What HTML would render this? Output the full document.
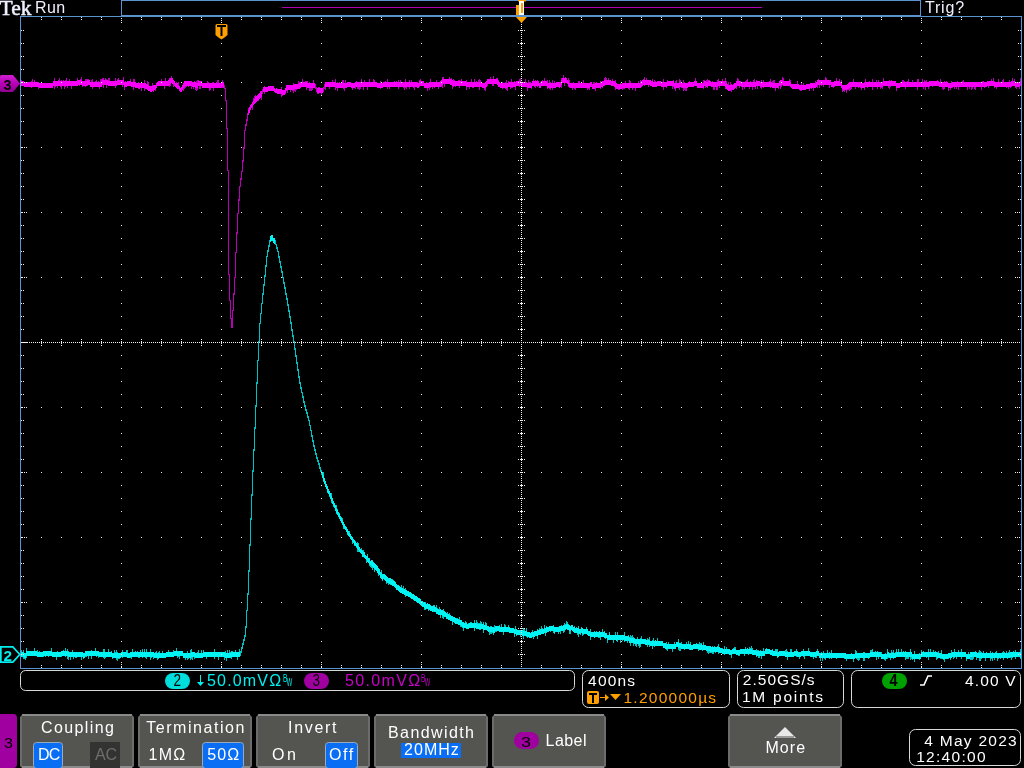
<!DOCTYPE html><html><head><meta charset="utf-8"><title>scope</title><style>html,body{margin:0;padding:0;background:#000;width:1024px;height:768px;overflow:hidden}svg{position:absolute;left:0;top:0;display:block;will-change:transform}</style></head><body><svg width="1024" height="768" viewBox="0 0 1024 768"><rect width="1024" height="768" fill="#000"/><g shape-rendering="crispEdges"><path fill="#5a93cf" d="M121 0h800v1h-800zM121 0h1v16h-1zM920 0h1v16h-1zM121 15h800v1h-800z"/><rect x="282" y="7" width="480" height="1" fill="#b000b0"/><path fill="#5a93cf" d="M20 16h1002v1h-1002zM20 668h1002v1h-1002zM20 16h1v653h-1zM1021 16h1v653h-1z"/><path fill="#b800b8" d="M21 80h1v1h-1zM31 81h1v1h-1zM31 87h1v1h-1zM32 79h1v3h-1zM34 80h1v2h-1zM38 87h1v2h-1zM54 78h1v3h-1zM54 86h1v3h-1zM55 86h1v1h-1zM57 86h1v2h-1zM58 80h1v1h-1zM59 78h1v3h-1zM60 86h1v1h-1zM61 80h1v1h-1zM61 86h1v3h-1zM63 80h1v1h-1zM64 86h1v3h-1zM65 80h1v1h-1zM65 86h1v1h-1zM66 78h1v3h-1zM67 86h1v2h-1zM69 79h1v2h-1zM71 86h1v3h-1zM77 78h1v2h-1zM79 85h1v1h-1zM80 79h1v1h-1zM81 77h1v3h-1zM82 86h1v1h-1zM85 79h1v2h-1zM85 86h1v1h-1zM86 79h1v2h-1zM87 79h1v1h-1zM87 85h1v1h-1zM88 79h1v1h-1zM91 80h1v2h-1zM92 79h1v3h-1zM92 87h1v2h-1zM95 81h1v1h-1zM96 80h1v2h-1zM98 81h1v1h-1zM99 87h1v2h-1zM100 79h1v3h-1zM101 79h1v3h-1zM102 78h1v2h-1zM103 78h1v2h-1zM103 85h1v3h-1zM105 78h1v2h-1zM106 79h1v1h-1zM106 85h1v3h-1zM108 78h1v3h-1zM109 78h1v3h-1zM115 78h1v3h-1zM115 86h1v2h-1zM117 79h1v1h-1zM118 78h1v2h-1zM122 85h1v2h-1zM123 77h1v3h-1zM124 87h1v3h-1zM125 81h1v1h-1zM130 79h1v2h-1zM133 79h1v3h-1zM133 87h1v3h-1zM134 79h1v3h-1zM138 82h1v1h-1zM138 88h1v1h-1zM141 88h1v3h-1zM144 80h1v3h-1zM144 88h1v3h-1zM147 81h1v3h-1zM148 82h1v3h-1zM152 83h1v3h-1zM153 91h1v1h-1zM155 89h1v2h-1zM161 79h1v2h-1zM164 86h1v3h-1zM165 78h1v3h-1zM169 78h1v1h-1zM169 85h1v2h-1zM170 84h1v2h-1zM171 76h1v2h-1zM173 84h1v3h-1zM176 82h1v1h-1zM178 82h1v3h-1zM183 88h1v3h-1zM184 87h1v2h-1zM185 86h1v2h-1zM186 86h1v1h-1zM188 86h1v1h-1zM191 86h1v3h-1zM193 87h1v2h-1zM194 81h1v1h-1zM195 88h1v2h-1zM196 81h1v2h-1zM196 88h1v3h-1zM197 80h1v3h-1zM197 88h1v2h-1zM198 80h1v1h-1zM199 86h1v3h-1zM200 86h1v3h-1zM207 81h1v2h-1zM208 82h1v1h-1zM209 88h1v3h-1zM210 88h1v2h-1zM212 82h1v1h-1zM213 82h1v1h-1zM213 88h1v3h-1zM216 82h1v1h-1zM217 80h1v3h-1zM218 80h1v3h-1zM221 87h1v1h-1zM222 80h1v2h-1zM222 87h1v1h-1zM248 108h1v2h-1zM252 107h1v3h-1zM253 98h1v3h-1zM254 96h1v3h-1zM255 95h1v2h-1zM258 100h1v1h-1zM260 91h1v1h-1zM261 97h1v3h-1zM264 86h1v1h-1zM264 92h1v2h-1zM281 87h1v2h-1zM281 94h1v3h-1zM282 95h1v1h-1zM285 93h1v1h-1zM287 90h1v3h-1zM290 90h1v2h-1zM292 90h1v1h-1zM293 83h1v2h-1zM293 90h1v3h-1zM294 89h1v2h-1zM295 89h1v3h-1zM296 89h1v1h-1zM298 81h1v3h-1zM299 82h1v1h-1zM302 79h1v3h-1zM305 81h1v1h-1zM306 81h1v1h-1zM306 87h1v3h-1zM307 81h1v2h-1zM309 82h1v1h-1zM309 88h1v3h-1zM310 88h1v3h-1zM311 88h1v3h-1zM312 88h1v2h-1zM313 80h1v3h-1zM317 93h1v1h-1zM318 87h1v1h-1zM318 93h1v1h-1zM319 87h1v1h-1zM321 93h1v3h-1zM325 87h1v3h-1zM329 87h1v2h-1zM332 80h1v2h-1zM335 79h1v3h-1zM335 87h1v3h-1zM337 82h1v1h-1zM337 88h1v3h-1zM339 82h1v1h-1zM341 82h1v1h-1zM342 80h1v3h-1zM343 80h1v3h-1zM343 88h1v1h-1zM344 88h1v3h-1zM345 80h1v3h-1zM352 88h1v2h-1zM355 87h1v2h-1zM356 81h1v1h-1zM357 87h1v2h-1zM358 87h1v2h-1zM359 87h1v3h-1zM360 87h1v2h-1zM361 79h1v3h-1zM363 87h1v3h-1zM364 80h1v2h-1zM367 87h1v3h-1zM369 79h1v3h-1zM373 79h1v3h-1zM374 80h1v2h-1zM380 81h1v2h-1zM380 88h1v1h-1zM385 81h1v1h-1zM387 79h1v3h-1zM387 87h1v2h-1zM389 87h1v2h-1zM394 81h1v1h-1zM396 81h1v1h-1zM398 80h1v2h-1zM398 87h1v2h-1zM400 80h1v2h-1zM403 87h1v1h-1zM404 87h1v3h-1zM405 79h1v3h-1zM405 87h1v1h-1zM406 87h1v2h-1zM409 80h1v2h-1zM409 87h1v2h-1zM411 80h1v2h-1zM413 87h1v1h-1zM414 87h1v3h-1zM417 82h1v1h-1zM419 80h1v1h-1zM419 86h1v1h-1zM420 79h1v2h-1zM426 82h1v1h-1zM427 88h1v3h-1zM429 87h1v3h-1zM430 79h1v3h-1zM430 87h1v1h-1zM432 87h1v2h-1zM434 87h1v1h-1zM436 80h1v2h-1zM438 87h1v2h-1zM441 86h1v1h-1zM442 77h1v2h-1zM442 85h1v3h-1zM443 77h1v2h-1zM444 84h1v3h-1zM449 77h1v2h-1zM451 78h1v1h-1zM452 86h1v3h-1zM453 79h1v2h-1zM453 86h1v1h-1zM454 80h1v1h-1zM455 86h1v1h-1zM458 80h1v1h-1zM459 80h1v1h-1zM459 86h1v2h-1zM461 79h1v2h-1zM466 80h1v2h-1zM466 87h1v3h-1zM469 87h1v2h-1zM471 79h1v3h-1zM472 87h1v1h-1zM473 87h1v1h-1zM474 79h1v3h-1zM476 81h1v1h-1zM478 80h1v2h-1zM479 79h1v3h-1zM479 87h1v3h-1zM480 80h1v2h-1zM484 88h1v2h-1zM485 88h1v3h-1zM487 84h1v2h-1zM490 77h1v2h-1zM492 84h1v2h-1zM493 76h1v3h-1zM493 84h1v2h-1zM496 78h1v1h-1zM497 78h1v1h-1zM498 80h1v1h-1zM502 82h1v1h-1zM502 88h1v1h-1zM505 82h1v1h-1zM505 88h1v1h-1zM506 80h1v3h-1zM506 88h1v2h-1zM507 88h1v3h-1zM508 81h1v1h-1zM510 87h1v2h-1zM511 79h1v3h-1zM511 87h1v1h-1zM512 87h1v1h-1zM514 81h1v1h-1zM515 87h1v3h-1zM519 79h1v2h-1zM519 86h1v1h-1zM520 78h1v3h-1zM525 79h1v3h-1zM527 88h1v3h-1zM528 80h1v3h-1zM529 82h1v1h-1zM530 82h1v1h-1zM531 88h1v1h-1zM533 79h1v2h-1zM534 86h1v1h-1zM535 80h1v1h-1zM535 86h1v2h-1zM537 80h1v1h-1zM537 86h1v1h-1zM540 82h1v1h-1zM542 80h1v1h-1zM544 78h1v3h-1zM547 80h1v3h-1zM547 88h1v1h-1zM549 80h1v3h-1zM549 88h1v1h-1zM550 82h1v1h-1zM550 88h1v2h-1zM552 80h1v3h-1zM552 88h1v2h-1zM554 81h1v2h-1zM561 78h1v2h-1zM561 85h1v3h-1zM563 75h1v3h-1zM564 83h1v3h-1zM565 77h1v1h-1zM568 78h1v3h-1zM568 86h1v1h-1zM569 80h1v3h-1zM569 87h1v1h-1zM572 88h1v2h-1zM573 82h1v1h-1zM574 88h1v1h-1zM575 88h1v2h-1zM578 81h1v2h-1zM579 81h1v2h-1zM581 82h1v1h-1zM583 80h1v3h-1zM587 88h1v2h-1zM588 88h1v1h-1zM589 88h1v2h-1zM593 82h1v2h-1zM594 82h1v2h-1zM595 88h1v3h-1zM596 82h1v1h-1zM600 81h1v1h-1zM600 88h1v1h-1zM602 87h1v1h-1zM604 78h1v2h-1zM605 77h1v3h-1zM606 78h1v2h-1zM608 78h1v2h-1zM612 79h1v2h-1zM615 80h1v2h-1zM615 88h1v2h-1zM618 89h1v1h-1zM619 89h1v1h-1zM620 83h1v1h-1zM622 88h1v2h-1zM623 88h1v1h-1zM624 88h1v1h-1zM625 81h1v2h-1zM628 88h1v1h-1zM629 80h1v3h-1zM629 88h1v2h-1zM630 81h1v2h-1zM632 88h1v2h-1zM635 88h1v3h-1zM638 81h1v2h-1zM640 80h1v2h-1zM643 79h1v1h-1zM644 77h1v3h-1zM644 85h1v1h-1zM646 78h1v2h-1zM648 85h1v2h-1zM652 79h1v2h-1zM654 80h1v2h-1zM655 81h1v1h-1zM663 79h1v3h-1zM663 87h1v3h-1zM666 87h1v1h-1zM667 80h1v1h-1zM672 86h1v3h-1zM673 80h1v1h-1zM673 86h1v1h-1zM674 88h1v1h-1zM675 81h1v2h-1zM675 88h1v3h-1zM676 80h1v3h-1zM679 79h1v3h-1zM679 87h1v3h-1zM680 80h1v2h-1zM681 87h1v1h-1zM683 80h1v3h-1zM683 88h1v3h-1zM684 82h1v1h-1zM684 88h1v2h-1zM685 88h1v3h-1zM686 88h1v3h-1zM689 81h1v1h-1zM695 78h1v3h-1zM703 80h1v3h-1zM703 88h1v1h-1zM704 80h1v1h-1zM705 86h1v2h-1zM706 80h1v2h-1zM707 79h1v3h-1zM707 87h1v1h-1zM708 80h1v1h-1zM709 80h1v1h-1zM712 81h1v1h-1zM713 87h1v3h-1zM714 87h1v3h-1zM716 87h1v3h-1zM717 80h1v2h-1zM717 87h1v3h-1zM718 79h1v2h-1zM719 86h1v2h-1zM722 79h1v2h-1zM725 78h1v3h-1zM725 87h1v2h-1zM726 81h1v2h-1zM728 82h1v3h-1zM730 82h1v3h-1zM730 90h1v1h-1zM731 84h1v1h-1zM731 90h1v2h-1zM736 87h1v2h-1zM737 78h1v3h-1zM738 79h1v2h-1zM739 86h1v2h-1zM742 87h1v3h-1zM744 87h1v2h-1zM745 81h1v1h-1zM746 80h1v2h-1zM747 79h1v3h-1zM749 87h1v2h-1zM750 81h1v1h-1zM752 87h1v3h-1zM753 80h1v2h-1zM754 79h1v3h-1zM755 87h1v2h-1zM756 80h1v1h-1zM757 86h1v3h-1zM760 87h1v1h-1zM761 80h1v2h-1zM761 87h1v2h-1zM763 80h1v2h-1zM763 87h1v1h-1zM769 81h1v1h-1zM770 79h1v3h-1zM770 87h1v1h-1zM772 81h1v2h-1zM773 80h1v3h-1zM774 80h1v3h-1zM775 88h1v3h-1zM778 88h1v1h-1zM780 86h1v3h-1zM781 85h1v2h-1zM782 77h1v3h-1zM783 78h1v3h-1zM789 79h1v2h-1zM790 80h1v2h-1zM797 81h1v3h-1zM800 90h1v1h-1zM801 82h1v3h-1zM801 90h1v1h-1zM803 83h1v2h-1zM809 89h1v2h-1zM811 88h1v1h-1zM813 88h1v3h-1zM815 81h1v3h-1zM817 85h1v3h-1zM818 79h1v1h-1zM819 85h1v3h-1zM821 85h1v1h-1zM823 85h1v2h-1zM825 77h1v3h-1zM826 78h1v2h-1zM829 85h1v3h-1zM833 87h1v1h-1zM834 86h1v1h-1zM836 78h1v3h-1zM839 79h1v2h-1zM841 80h1v3h-1zM842 89h1v3h-1zM844 90h1v2h-1zM846 90h1v3h-1zM847 89h1v1h-1zM848 89h1v1h-1zM849 88h1v3h-1zM850 87h1v3h-1zM851 87h1v2h-1zM853 79h1v3h-1zM855 87h1v2h-1zM858 87h1v1h-1zM860 87h1v1h-1zM861 88h1v2h-1zM864 82h1v1h-1zM864 88h1v2h-1zM865 79h1v3h-1zM867 87h1v1h-1zM869 81h1v1h-1zM872 79h1v3h-1zM872 87h1v3h-1zM876 80h1v2h-1zM877 87h1v2h-1zM878 80h1v2h-1zM880 87h1v2h-1zM881 87h1v1h-1zM882 87h1v2h-1zM883 78h1v3h-1zM888 86h1v2h-1zM889 80h1v1h-1zM889 86h1v3h-1zM890 86h1v1h-1zM891 80h1v1h-1zM896 88h1v3h-1zM902 80h1v2h-1zM903 80h1v2h-1zM904 81h1v1h-1zM905 87h1v2h-1zM907 81h1v1h-1zM908 79h1v3h-1zM912 80h1v2h-1zM917 79h1v3h-1zM917 87h1v3h-1zM918 79h1v3h-1zM922 79h1v3h-1zM923 87h1v2h-1zM924 80h1v2h-1zM925 81h1v1h-1zM925 87h1v3h-1zM926 80h1v2h-1zM928 87h1v2h-1zM929 86h1v1h-1zM932 86h1v1h-1zM937 80h1v1h-1zM940 79h1v3h-1zM942 87h1v2h-1zM943 87h1v3h-1zM944 81h1v1h-1zM944 87h1v2h-1zM946 81h1v1h-1zM948 88h1v3h-1zM950 88h1v2h-1zM951 81h1v2h-1zM952 87h1v1h-1zM954 87h1v2h-1zM956 87h1v2h-1zM957 81h1v1h-1zM958 87h1v3h-1zM962 81h1v1h-1zM963 80h1v2h-1zM967 87h1v3h-1zM969 87h1v2h-1zM971 87h1v3h-1zM972 87h1v2h-1zM974 87h1v2h-1zM975 87h1v3h-1zM981 87h1v3h-1zM982 81h1v1h-1zM983 81h1v1h-1zM984 87h1v1h-1zM988 86h1v2h-1zM991 79h1v2h-1zM993 78h1v3h-1zM994 81h1v1h-1zM994 87h1v1h-1zM996 87h1v2h-1zM998 79h1v3h-1zM1002 80h1v2h-1zM1003 79h1v3h-1zM1006 87h1v1h-1zM1008 87h1v2h-1zM1009 80h1v2h-1zM1010 87h1v1h-1zM1011 86h1v1h-1zM1012 78h1v3h-1zM1014 79h1v2h-1zM1015 87h1v1h-1zM1016 87h1v2h-1zM1019 87h1v2h-1zM1020 78h1v3h-1z"/><path fill="#f800f8" d="M21 81h1v5h-1zM22 81h1v5h-1zM23 81h1v5h-1zM24 82h1v5h-1zM25 82h1v5h-1zM26 82h1v5h-1zM27 82h1v5h-1zM28 82h1v5h-1zM29 82h1v5h-1zM30 82h1v5h-1zM31 82h1v5h-1zM32 82h1v5h-1zM33 82h1v5h-1zM34 82h1v5h-1zM35 82h1v5h-1zM36 82h1v5h-1zM37 82h1v5h-1zM38 82h1v5h-1zM39 83h1v5h-1zM40 83h1v5h-1zM41 83h1v5h-1zM42 83h1v5h-1zM43 83h1v5h-1zM44 83h1v5h-1zM45 83h1v5h-1zM46 83h1v5h-1zM47 83h1v5h-1zM48 83h1v5h-1zM49 83h1v5h-1zM50 83h1v5h-1zM51 83h1v5h-1zM52 83h1v5h-1zM53 81h1v5h-1zM54 81h1v5h-1zM55 81h1v5h-1zM56 81h1v5h-1zM57 81h1v5h-1zM58 81h1v5h-1zM59 81h1v5h-1zM60 81h1v5h-1zM61 81h1v5h-1zM62 81h1v5h-1zM63 81h1v5h-1zM64 81h1v5h-1zM65 81h1v5h-1zM66 81h1v5h-1zM67 81h1v5h-1zM68 81h1v5h-1zM69 81h1v5h-1zM70 81h1v5h-1zM71 81h1v5h-1zM72 81h1v5h-1zM73 81h1v5h-1zM74 81h1v5h-1zM75 81h1v5h-1zM76 81h1v5h-1zM77 80h1v6h-1zM78 80h1v5h-1zM79 80h1v5h-1zM80 80h1v5h-1zM81 80h1v5h-1zM82 81h1v5h-1zM83 81h1v5h-1zM84 81h1v5h-1zM85 81h1v5h-1zM86 81h1v5h-1zM87 80h1v5h-1zM88 80h1v5h-1zM89 80h1v5h-1zM90 82h1v5h-1zM91 82h1v5h-1zM92 82h1v5h-1zM93 82h1v5h-1zM94 82h1v5h-1zM95 82h1v5h-1zM96 82h1v5h-1zM97 82h1v5h-1zM98 82h1v5h-1zM99 82h1v5h-1zM100 82h1v5h-1zM101 82h1v5h-1zM102 80h1v5h-1zM103 80h1v5h-1zM104 80h1v5h-1zM105 80h1v5h-1zM106 80h1v5h-1zM107 80h1v5h-1zM108 81h1v5h-1zM109 81h1v5h-1zM110 81h1v5h-1zM111 81h1v5h-1zM112 81h1v5h-1zM113 81h1v5h-1zM114 81h1v5h-1zM115 81h1v5h-1zM116 81h1v5h-1zM117 80h1v5h-1zM118 80h1v5h-1zM119 80h1v5h-1zM120 80h1v5h-1zM121 80h1v5h-1zM122 80h1v5h-1zM123 80h1v5h-1zM124 82h1v5h-1zM125 82h1v5h-1zM126 82h1v5h-1zM127 81h1v5h-1zM128 81h1v5h-1zM129 81h1v5h-1zM130 81h1v5h-1zM131 82h1v5h-1zM132 82h1v5h-1zM133 82h1v5h-1zM134 82h1v5h-1zM135 82h1v6h-1zM136 83h1v5h-1zM137 83h1v5h-1zM138 83h1v5h-1zM139 83h1v6h-1zM140 83h1v5h-1zM141 83h1v5h-1zM142 83h1v5h-1zM143 83h1v5h-1zM144 83h1v5h-1zM145 83h1v6h-1zM146 84h1v5h-1zM147 84h1v6h-1zM148 85h1v6h-1zM149 86h1v5h-1zM150 86h1v6h-1zM151 86h1v6h-1zM152 86h1v5h-1zM153 85h1v6h-1zM154 85h1v5h-1zM155 85h1v4h-1zM156 83h1v5h-1zM157 82h1v4h-1zM158 81h1v5h-1zM159 81h1v5h-1zM160 81h1v5h-1zM161 81h1v5h-1zM162 81h1v5h-1zM163 81h1v5h-1zM164 81h1v5h-1zM165 81h1v5h-1zM166 81h1v5h-1zM167 81h1v5h-1zM168 80h1v6h-1zM169 79h1v6h-1zM170 78h1v6h-1zM171 78h1v5h-1zM172 78h1v6h-1zM173 80h1v4h-1zM174 81h1v5h-1zM175 83h1v4h-1zM176 83h1v5h-1zM177 83h1v6h-1zM178 85h1v4h-1zM179 86h1v5h-1zM180 88h1v4h-1zM181 87h1v5h-1zM182 85h1v5h-1zM183 83h1v5h-1zM184 81h1v6h-1zM185 81h1v5h-1zM186 81h1v5h-1zM187 81h1v5h-1zM188 81h1v5h-1zM189 81h1v5h-1zM190 81h1v5h-1zM191 81h1v5h-1zM192 82h1v5h-1zM193 82h1v5h-1zM194 82h1v5h-1zM195 82h1v6h-1zM196 83h1v5h-1zM197 83h1v5h-1zM198 81h1v5h-1zM199 81h1v5h-1zM200 81h1v5h-1zM201 81h1v5h-1zM202 83h1v5h-1zM203 83h1v5h-1zM204 83h1v5h-1zM205 83h1v5h-1zM206 83h1v5h-1zM207 83h1v5h-1zM208 83h1v5h-1zM209 83h1v5h-1zM210 83h1v5h-1zM211 83h1v5h-1zM212 83h1v5h-1zM213 83h1v5h-1zM214 83h1v5h-1zM215 83h1v5h-1zM216 83h1v5h-1zM217 83h1v5h-1zM218 83h1v5h-1zM219 83h1v5h-1zM220 83h1v5h-1zM221 82h1v5h-1zM222 82h1v5h-1zM223 82h1v6h-1zM248 110h1v5h-1zM249 107h1v6h-1zM250 105h1v5h-1zM251 104h1v4h-1zM252 102h1v5h-1zM253 101h1v4h-1zM254 99h1v5h-1zM255 97h1v6h-1zM256 96h1v6h-1zM257 95h1v6h-1zM258 94h1v6h-1zM259 93h1v6h-1zM260 92h1v6h-1zM261 91h1v6h-1zM263 87h1v5h-1zM264 87h1v5h-1zM265 87h1v5h-1zM266 87h1v5h-1zM267 87h1v5h-1zM268 86h1v5h-1zM269 86h1v5h-1zM270 86h1v5h-1zM271 86h1v5h-1zM272 86h1v5h-1zM273 86h1v5h-1zM274 88h1v4h-1zM275 89h1v4h-1zM276 88h1v5h-1zM277 89h1v5h-1zM278 89h1v5h-1zM279 89h1v5h-1zM280 89h1v5h-1zM281 89h1v5h-1zM282 90h1v5h-1zM283 90h1v5h-1zM284 90h1v5h-1zM285 88h1v5h-1zM286 85h1v6h-1zM287 85h1v5h-1zM288 85h1v5h-1zM289 85h1v5h-1zM290 85h1v5h-1zM291 85h1v5h-1zM292 85h1v5h-1zM293 85h1v5h-1zM294 84h1v5h-1zM295 84h1v5h-1zM296 84h1v5h-1zM297 84h1v5h-1zM298 84h1v5h-1zM299 83h1v6h-1zM300 82h1v6h-1zM301 82h1v5h-1zM302 82h1v5h-1zM303 82h1v5h-1zM304 82h1v5h-1zM305 82h1v5h-1zM306 82h1v5h-1zM307 83h1v5h-1zM308 83h1v5h-1zM309 83h1v5h-1zM310 83h1v5h-1zM311 83h1v5h-1zM312 83h1v5h-1zM313 83h1v5h-1zM314 83h1v5h-1zM317 88h1v5h-1zM318 88h1v5h-1zM319 88h1v5h-1zM320 88h1v5h-1zM321 88h1v5h-1zM322 88h1v5h-1zM325 82h1v5h-1zM326 82h1v5h-1zM327 82h1v5h-1zM328 82h1v5h-1zM329 82h1v5h-1zM330 82h1v5h-1zM331 82h1v5h-1zM332 82h1v5h-1zM333 82h1v5h-1zM334 82h1v5h-1zM335 82h1v5h-1zM336 83h1v5h-1zM337 83h1v5h-1zM338 83h1v5h-1zM339 83h1v5h-1zM340 83h1v5h-1zM341 83h1v5h-1zM342 83h1v5h-1zM343 83h1v5h-1zM344 83h1v5h-1zM345 83h1v5h-1zM346 83h1v5h-1zM347 82h1v5h-1zM348 82h1v5h-1zM349 82h1v5h-1zM350 82h1v5h-1zM351 83h1v5h-1zM352 83h1v5h-1zM353 83h1v5h-1zM354 83h1v5h-1zM355 82h1v5h-1zM356 82h1v5h-1zM357 82h1v5h-1zM358 82h1v5h-1zM359 82h1v5h-1zM360 82h1v5h-1zM361 82h1v5h-1zM362 82h1v5h-1zM363 82h1v5h-1zM364 82h1v5h-1zM365 82h1v5h-1zM366 82h1v5h-1zM367 82h1v5h-1zM368 82h1v5h-1zM369 82h1v5h-1zM370 82h1v5h-1zM371 82h1v5h-1zM372 82h1v5h-1zM373 82h1v5h-1zM374 82h1v5h-1zM375 82h1v5h-1zM376 82h1v5h-1zM377 83h1v5h-1zM378 83h1v5h-1zM379 83h1v5h-1zM380 83h1v5h-1zM381 83h1v5h-1zM382 83h1v5h-1zM383 82h1v5h-1zM384 82h1v5h-1zM385 82h1v5h-1zM386 82h1v5h-1zM387 82h1v5h-1zM388 82h1v5h-1zM389 82h1v5h-1zM390 82h1v5h-1zM391 82h1v5h-1zM392 82h1v5h-1zM393 82h1v5h-1zM394 82h1v5h-1zM395 82h1v5h-1zM396 82h1v5h-1zM397 82h1v5h-1zM398 82h1v5h-1zM399 82h1v5h-1zM400 82h1v5h-1zM401 82h1v5h-1zM402 82h1v5h-1zM403 82h1v5h-1zM404 82h1v5h-1zM405 82h1v5h-1zM406 82h1v5h-1zM407 82h1v5h-1zM408 82h1v5h-1zM409 82h1v5h-1zM410 82h1v5h-1zM411 82h1v5h-1zM412 82h1v5h-1zM413 82h1v5h-1zM414 82h1v5h-1zM415 82h1v5h-1zM416 82h1v5h-1zM417 83h1v5h-1zM418 83h1v5h-1zM419 81h1v5h-1zM420 81h1v5h-1zM421 81h1v5h-1zM422 81h1v5h-1zM423 81h1v5h-1zM424 83h1v5h-1zM425 83h1v5h-1zM426 83h1v5h-1zM427 83h1v5h-1zM428 83h1v5h-1zM429 82h1v5h-1zM430 82h1v5h-1zM431 82h1v5h-1zM432 82h1v5h-1zM433 82h1v5h-1zM434 82h1v5h-1zM435 82h1v5h-1zM436 82h1v5h-1zM437 82h1v5h-1zM438 82h1v5h-1zM439 82h1v5h-1zM440 81h1v6h-1zM441 80h1v6h-1zM442 79h1v6h-1zM443 79h1v5h-1zM444 79h1v5h-1zM445 79h1v5h-1zM446 79h1v5h-1zM447 79h1v5h-1zM448 79h1v5h-1zM449 79h1v5h-1zM450 79h1v6h-1zM451 79h1v6h-1zM452 80h1v6h-1zM453 81h1v5h-1zM454 81h1v5h-1zM455 81h1v5h-1zM456 81h1v5h-1zM457 81h1v5h-1zM458 81h1v5h-1zM459 81h1v5h-1zM460 81h1v5h-1zM461 81h1v5h-1zM462 81h1v5h-1zM463 81h1v5h-1zM464 81h1v5h-1zM465 81h1v5h-1zM466 82h1v5h-1zM467 82h1v5h-1zM468 82h1v5h-1zM469 82h1v5h-1zM470 82h1v5h-1zM471 82h1v5h-1zM472 82h1v5h-1zM473 82h1v5h-1zM474 82h1v5h-1zM475 82h1v5h-1zM476 82h1v5h-1zM477 82h1v5h-1zM478 82h1v5h-1zM479 82h1v5h-1zM480 82h1v5h-1zM481 82h1v5h-1zM482 83h1v5h-1zM483 83h1v5h-1zM484 83h1v5h-1zM485 82h1v6h-1zM486 81h1v6h-1zM487 79h1v5h-1zM488 79h1v5h-1zM489 79h1v5h-1zM490 79h1v5h-1zM491 79h1v5h-1zM492 79h1v5h-1zM493 79h1v5h-1zM494 79h1v5h-1zM495 79h1v5h-1zM496 79h1v5h-1zM497 79h1v6h-1zM498 81h1v6h-1zM499 82h1v5h-1zM500 83h1v5h-1zM501 83h1v5h-1zM502 83h1v5h-1zM503 83h1v5h-1zM504 83h1v5h-1zM505 83h1v5h-1zM506 83h1v5h-1zM507 83h1v5h-1zM508 82h1v5h-1zM509 82h1v5h-1zM510 82h1v5h-1zM511 82h1v5h-1zM512 82h1v5h-1zM513 82h1v5h-1zM514 82h1v5h-1zM515 82h1v5h-1zM516 81h1v5h-1zM517 81h1v5h-1zM518 81h1v5h-1zM519 81h1v5h-1zM520 81h1v5h-1zM521 82h1v5h-1zM522 82h1v5h-1zM523 82h1v5h-1zM524 82h1v5h-1zM525 82h1v5h-1zM526 82h1v5h-1zM527 83h1v5h-1zM528 83h1v5h-1zM529 83h1v5h-1zM530 83h1v5h-1zM531 83h1v5h-1zM532 81h1v5h-1zM533 81h1v5h-1zM534 81h1v5h-1zM535 81h1v5h-1zM536 81h1v5h-1zM537 81h1v5h-1zM538 81h1v5h-1zM539 83h1v5h-1zM540 83h1v5h-1zM541 81h1v5h-1zM542 81h1v5h-1zM543 81h1v5h-1zM544 81h1v5h-1zM545 81h1v5h-1zM546 81h1v5h-1zM547 83h1v5h-1zM548 83h1v5h-1zM549 83h1v5h-1zM550 83h1v5h-1zM551 83h1v5h-1zM552 83h1v5h-1zM553 83h1v5h-1zM554 83h1v5h-1zM555 83h1v5h-1zM556 82h1v5h-1zM557 82h1v5h-1zM558 82h1v5h-1zM559 82h1v6h-1zM560 82h1v5h-1zM561 80h1v5h-1zM562 78h1v5h-1zM563 78h1v5h-1zM564 78h1v5h-1zM565 78h1v5h-1zM566 78h1v5h-1zM567 80h1v4h-1zM568 81h1v5h-1zM569 83h1v4h-1zM570 83h1v5h-1zM571 83h1v5h-1zM572 83h1v5h-1zM573 83h1v5h-1zM574 83h1v5h-1zM575 83h1v5h-1zM576 83h1v5h-1zM577 83h1v5h-1zM578 83h1v5h-1zM579 83h1v5h-1zM580 83h1v5h-1zM581 83h1v5h-1zM582 83h1v5h-1zM583 83h1v5h-1zM584 83h1v5h-1zM585 83h1v5h-1zM586 83h1v5h-1zM587 83h1v5h-1zM588 83h1v5h-1zM589 83h1v5h-1zM590 82h1v5h-1zM591 82h1v5h-1zM592 84h1v5h-1zM593 84h1v5h-1zM594 84h1v5h-1zM595 83h1v5h-1zM596 83h1v5h-1zM597 83h1v5h-1zM598 83h1v5h-1zM599 83h1v5h-1zM600 82h1v6h-1zM601 82h1v5h-1zM602 81h1v6h-1zM603 81h1v5h-1zM604 80h1v6h-1zM605 80h1v5h-1zM606 80h1v5h-1zM607 80h1v5h-1zM608 80h1v5h-1zM609 80h1v5h-1zM610 80h1v5h-1zM611 81h1v5h-1zM612 81h1v5h-1zM613 81h1v5h-1zM614 81h1v6h-1zM615 82h1v6h-1zM616 83h1v6h-1zM617 84h1v5h-1zM618 84h1v5h-1zM619 84h1v5h-1zM620 84h1v5h-1zM621 84h1v5h-1zM622 83h1v5h-1zM623 83h1v5h-1zM624 83h1v5h-1zM625 83h1v5h-1zM626 83h1v5h-1zM627 83h1v5h-1zM628 83h1v5h-1zM629 83h1v5h-1zM630 83h1v5h-1zM631 83h1v5h-1zM632 83h1v5h-1zM633 83h1v5h-1zM634 83h1v5h-1zM635 83h1v5h-1zM636 83h1v5h-1zM637 83h1v5h-1zM638 83h1v5h-1zM639 83h1v5h-1zM640 82h1v6h-1zM641 81h1v6h-1zM642 80h1v6h-1zM643 80h1v5h-1zM644 80h1v5h-1zM645 80h1v5h-1zM646 80h1v5h-1zM647 80h1v5h-1zM648 80h1v5h-1zM649 80h1v5h-1zM650 80h1v6h-1zM651 81h1v5h-1zM652 81h1v6h-1zM653 82h1v5h-1zM654 82h1v5h-1zM655 82h1v5h-1zM656 82h1v5h-1zM657 81h1v5h-1zM658 81h1v5h-1zM659 81h1v5h-1zM660 81h1v5h-1zM661 82h1v5h-1zM662 82h1v5h-1zM663 82h1v5h-1zM664 82h1v5h-1zM665 82h1v5h-1zM666 82h1v5h-1zM667 81h1v5h-1zM668 81h1v5h-1zM669 81h1v5h-1zM670 81h1v5h-1zM671 81h1v5h-1zM672 81h1v5h-1zM673 81h1v5h-1zM674 83h1v5h-1zM675 83h1v5h-1zM676 83h1v5h-1zM677 83h1v5h-1zM678 83h1v5h-1zM679 82h1v5h-1zM680 82h1v5h-1zM681 82h1v5h-1zM682 83h1v5h-1zM683 83h1v5h-1zM684 83h1v5h-1zM685 83h1v5h-1zM686 83h1v5h-1zM687 83h1v5h-1zM688 82h1v5h-1zM689 82h1v5h-1zM690 82h1v5h-1zM691 82h1v5h-1zM692 82h1v5h-1zM693 82h1v5h-1zM694 81h1v5h-1zM695 81h1v5h-1zM696 81h1v5h-1zM697 83h1v5h-1zM698 83h1v5h-1zM699 83h1v5h-1zM700 83h1v5h-1zM701 83h1v5h-1zM702 83h1v5h-1zM703 83h1v5h-1zM704 81h1v5h-1zM705 81h1v5h-1zM706 82h1v5h-1zM707 82h1v5h-1zM708 81h1v5h-1zM709 81h1v5h-1zM710 81h1v5h-1zM711 82h1v5h-1zM712 82h1v5h-1zM713 82h1v5h-1zM714 82h1v5h-1zM715 82h1v5h-1zM716 82h1v5h-1zM717 82h1v5h-1zM718 81h1v5h-1zM719 81h1v5h-1zM720 81h1v5h-1zM721 81h1v5h-1zM722 81h1v5h-1zM723 81h1v5h-1zM724 81h1v5h-1zM725 81h1v6h-1zM726 83h1v6h-1zM727 84h1v6h-1zM728 85h1v6h-1zM729 85h1v6h-1zM730 85h1v5h-1zM731 85h1v5h-1zM732 85h1v5h-1zM733 84h1v6h-1zM734 83h1v6h-1zM735 83h1v5h-1zM736 81h1v6h-1zM737 81h1v5h-1zM738 81h1v5h-1zM739 81h1v5h-1zM740 81h1v5h-1zM741 82h1v5h-1zM742 82h1v5h-1zM743 82h1v5h-1zM744 82h1v5h-1zM745 82h1v5h-1zM746 82h1v5h-1zM747 82h1v5h-1zM748 82h1v5h-1zM749 82h1v5h-1zM750 82h1v5h-1zM751 82h1v5h-1zM752 82h1v5h-1zM753 82h1v5h-1zM754 82h1v5h-1zM755 82h1v5h-1zM756 81h1v5h-1zM757 81h1v5h-1zM758 81h1v5h-1zM759 81h1v5h-1zM760 82h1v5h-1zM761 82h1v5h-1zM762 82h1v5h-1zM763 82h1v5h-1zM764 82h1v5h-1zM765 82h1v5h-1zM766 82h1v5h-1zM767 82h1v5h-1zM768 82h1v5h-1zM769 82h1v5h-1zM770 82h1v5h-1zM771 82h1v5h-1zM772 83h1v5h-1zM773 83h1v5h-1zM774 83h1v5h-1zM775 83h1v5h-1zM776 83h1v5h-1zM777 83h1v5h-1zM778 83h1v5h-1zM779 81h1v5h-1zM780 80h1v6h-1zM781 80h1v5h-1zM782 80h1v5h-1zM783 81h1v5h-1zM784 81h1v5h-1zM785 81h1v5h-1zM786 81h1v5h-1zM787 81h1v5h-1zM788 81h1v5h-1zM789 81h1v5h-1zM790 82h1v5h-1zM791 84h1v4h-1zM792 84h1v5h-1zM793 84h1v5h-1zM794 84h1v5h-1zM795 84h1v5h-1zM796 84h1v5h-1zM797 84h1v5h-1zM798 84h1v5h-1zM799 85h1v5h-1zM800 85h1v5h-1zM801 85h1v5h-1zM802 85h1v5h-1zM803 85h1v5h-1zM804 85h1v5h-1zM805 85h1v5h-1zM806 84h1v5h-1zM807 84h1v5h-1zM808 84h1v5h-1zM809 84h1v5h-1zM810 83h1v5h-1zM811 83h1v5h-1zM812 83h1v5h-1zM813 83h1v5h-1zM814 83h1v5h-1zM815 84h1v4h-1zM816 82h1v5h-1zM817 80h1v5h-1zM818 80h1v5h-1zM819 80h1v5h-1zM820 80h1v5h-1zM821 80h1v5h-1zM822 80h1v5h-1zM823 80h1v5h-1zM824 80h1v5h-1zM825 80h1v5h-1zM826 80h1v5h-1zM827 80h1v5h-1zM828 80h1v5h-1zM829 80h1v5h-1zM830 80h1v5h-1zM831 82h1v5h-1zM832 82h1v5h-1zM833 82h1v5h-1zM834 81h1v5h-1zM835 81h1v5h-1zM836 81h1v5h-1zM837 81h1v5h-1zM838 81h1v5h-1zM839 81h1v5h-1zM840 82h1v4h-1zM841 83h1v5h-1zM842 85h1v4h-1zM843 85h1v6h-1zM844 85h1v5h-1zM845 85h1v5h-1zM846 85h1v5h-1zM847 84h1v5h-1zM848 83h1v6h-1zM849 82h1v6h-1zM850 82h1v5h-1zM851 82h1v5h-1zM852 82h1v5h-1zM853 82h1v5h-1zM854 82h1v5h-1zM855 82h1v5h-1zM856 82h1v5h-1zM857 82h1v5h-1zM858 82h1v5h-1zM859 82h1v5h-1zM860 82h1v5h-1zM861 83h1v5h-1zM862 83h1v5h-1zM863 83h1v5h-1zM864 83h1v5h-1zM865 82h1v5h-1zM866 82h1v5h-1zM867 82h1v5h-1zM868 82h1v5h-1zM869 82h1v5h-1zM870 82h1v5h-1zM871 82h1v5h-1zM872 82h1v5h-1zM873 82h1v5h-1zM874 82h1v5h-1zM875 82h1v5h-1zM876 82h1v5h-1zM877 82h1v5h-1zM878 82h1v5h-1zM879 82h1v5h-1zM880 82h1v5h-1zM881 82h1v5h-1zM882 82h1v5h-1zM883 81h1v5h-1zM884 81h1v5h-1zM885 81h1v5h-1zM886 81h1v5h-1zM887 81h1v5h-1zM888 81h1v5h-1zM889 81h1v5h-1zM890 81h1v5h-1zM891 81h1v5h-1zM892 81h1v5h-1zM893 81h1v5h-1zM894 81h1v5h-1zM895 81h1v5h-1zM896 83h1v5h-1zM897 83h1v5h-1zM898 83h1v5h-1zM899 83h1v5h-1zM900 82h1v5h-1zM901 82h1v5h-1zM902 82h1v5h-1zM903 82h1v5h-1zM904 82h1v5h-1zM905 82h1v5h-1zM906 82h1v5h-1zM907 82h1v5h-1zM908 82h1v5h-1zM909 82h1v5h-1zM910 82h1v5h-1zM911 82h1v5h-1zM912 82h1v5h-1zM913 82h1v5h-1zM914 82h1v5h-1zM915 82h1v5h-1zM916 82h1v5h-1zM917 82h1v5h-1zM918 82h1v5h-1zM919 82h1v5h-1zM920 82h1v5h-1zM921 82h1v5h-1zM922 82h1v5h-1zM923 82h1v5h-1zM924 82h1v5h-1zM925 82h1v5h-1zM926 82h1v5h-1zM927 82h1v5h-1zM928 82h1v5h-1zM929 81h1v5h-1zM930 81h1v5h-1zM931 81h1v5h-1zM932 81h1v5h-1zM933 81h1v5h-1zM934 81h1v5h-1zM935 81h1v5h-1zM936 81h1v5h-1zM937 81h1v5h-1zM938 81h1v5h-1zM939 82h1v5h-1zM940 82h1v5h-1zM941 82h1v5h-1zM942 82h1v5h-1zM943 82h1v5h-1zM944 82h1v5h-1zM945 82h1v5h-1zM946 82h1v5h-1zM947 82h1v5h-1zM948 83h1v5h-1zM949 83h1v5h-1zM950 83h1v5h-1zM951 83h1v5h-1zM952 82h1v5h-1zM953 82h1v5h-1zM954 82h1v5h-1zM955 82h1v5h-1zM956 82h1v5h-1zM957 82h1v5h-1zM958 82h1v5h-1zM959 82h1v5h-1zM960 82h1v5h-1zM961 82h1v5h-1zM962 82h1v5h-1zM963 82h1v5h-1zM964 82h1v5h-1zM965 82h1v5h-1zM966 82h1v5h-1zM967 82h1v5h-1zM968 82h1v5h-1zM969 82h1v5h-1zM970 82h1v5h-1zM971 82h1v5h-1zM972 82h1v5h-1zM973 82h1v5h-1zM974 82h1v5h-1zM975 82h1v5h-1zM976 82h1v5h-1zM977 82h1v5h-1zM978 82h1v5h-1zM979 82h1v5h-1zM980 82h1v5h-1zM981 82h1v5h-1zM982 82h1v5h-1zM983 82h1v5h-1zM984 82h1v5h-1zM985 82h1v5h-1zM986 82h1v5h-1zM987 81h1v5h-1zM988 81h1v5h-1zM989 81h1v5h-1zM990 81h1v5h-1zM991 81h1v5h-1zM992 81h1v5h-1zM993 81h1v5h-1zM994 82h1v5h-1zM995 82h1v5h-1zM996 82h1v5h-1zM997 82h1v5h-1zM998 82h1v5h-1zM999 82h1v5h-1zM1000 82h1v5h-1zM1001 82h1v5h-1zM1002 82h1v5h-1zM1003 82h1v5h-1zM1004 82h1v5h-1zM1005 82h1v5h-1zM1006 82h1v5h-1zM1007 82h1v5h-1zM1008 82h1v5h-1zM1009 82h1v5h-1zM1010 82h1v5h-1zM1011 81h1v5h-1zM1012 81h1v5h-1zM1013 81h1v5h-1zM1014 81h1v5h-1zM1015 82h1v5h-1zM1016 82h1v5h-1zM1017 82h1v5h-1zM1018 82h1v5h-1zM1019 82h1v5h-1zM1020 81h1v5h-1z"/><path fill="#b800b8" d="M224 85h1v4h-1zM225 88h1v13h-1zM226 100h1v29h-1zM227 128h1v43h-1zM228 170h1v105h-1zM229 274h1v27h-1zM230 300h1v19h-1zM231 318h1v10h-1zM232 310h1v18h-1zM233 293h1v18h-1zM234 277h1v18h-1zM235 252h1v26h-1zM236 232h1v21h-1zM237 213h1v21h-1zM238 199h1v15h-1zM239 186h1v15h-1zM240 178h1v9h-1zM241 171h1v9h-1zM242 160h1v12h-1zM243 147h1v15h-1zM244 130h1v19h-1zM245 124h1v7h-1zM246 119h1v7h-1zM247 113h1v8h-1zM262 89h1v5h-1zM315 84h1v5h-1zM316 87h1v5h-1zM323 87h1v5h-1zM324 84h1v5h-1z"/><path fill="#00c0c0" d="M21 650h1v2h-1zM23 650h1v2h-1zM23 657h1v2h-1zM24 658h1v1h-1zM25 658h1v2h-1zM26 648h1v3h-1zM26 656h1v2h-1zM34 648h1v3h-1zM37 650h1v2h-1zM39 651h1v1h-1zM43 656h1v1h-1zM45 656h1v1h-1zM48 656h1v1h-1zM51 648h1v3h-1zM56 657h1v3h-1zM57 651h1v1h-1zM61 656h1v1h-1zM63 650h1v1h-1zM65 648h1v3h-1zM65 656h1v1h-1zM67 649h1v2h-1zM67 656h1v3h-1zM68 651h1v1h-1zM68 657h1v3h-1zM70 657h1v3h-1zM72 650h1v2h-1zM73 657h1v2h-1zM75 657h1v1h-1zM76 657h1v1h-1zM81 657h1v3h-1zM83 658h1v1h-1zM85 656h1v1h-1zM86 656h1v1h-1zM88 656h1v3h-1zM91 650h1v1h-1zM91 656h1v3h-1zM95 648h1v3h-1zM96 656h1v1h-1zM98 656h1v2h-1zM103 649h1v3h-1zM103 657h1v1h-1zM104 649h1v3h-1zM104 657h1v2h-1zM105 657h1v1h-1zM108 649h1v3h-1zM111 651h1v1h-1zM112 658h1v1h-1zM114 650h1v3h-1zM115 652h1v1h-1zM116 650h1v3h-1zM116 658h1v2h-1zM117 652h1v1h-1zM117 658h1v3h-1zM118 658h1v1h-1zM119 658h1v1h-1zM122 650h1v2h-1zM122 657h1v1h-1zM126 650h1v2h-1zM127 650h1v3h-1zM130 657h1v1h-1zM131 657h1v2h-1zM132 649h1v3h-1zM135 651h1v1h-1zM137 651h1v1h-1zM138 657h1v1h-1zM139 657h1v1h-1zM140 650h1v2h-1zM142 649h1v3h-1zM142 657h1v1h-1zM144 649h1v3h-1zM145 657h1v1h-1zM146 649h1v3h-1zM146 657h1v2h-1zM150 649h1v3h-1zM150 657h1v3h-1zM151 657h1v1h-1zM153 657h1v2h-1zM155 652h1v1h-1zM156 651h1v2h-1zM157 658h1v2h-1zM158 652h1v1h-1zM158 658h1v1h-1zM159 651h1v2h-1zM162 651h1v2h-1zM168 650h1v2h-1zM173 650h1v2h-1zM176 648h1v3h-1zM177 656h1v2h-1zM178 656h1v1h-1zM179 656h1v3h-1zM185 658h1v2h-1zM187 651h1v2h-1zM187 658h1v2h-1zM188 658h1v1h-1zM190 650h1v3h-1zM190 658h1v2h-1zM191 649h1v3h-1zM191 657h1v2h-1zM192 657h1v3h-1zM194 657h1v2h-1zM197 652h1v1h-1zM198 650h1v3h-1zM201 650h1v3h-1zM203 650h1v2h-1zM206 657h1v2h-1zM214 649h1v3h-1zM214 657h1v2h-1zM218 657h1v3h-1zM224 657h1v3h-1zM225 651h1v2h-1zM226 658h1v3h-1zM227 650h1v3h-1zM229 650h1v3h-1zM230 652h1v1h-1zM231 651h1v1h-1zM231 657h1v2h-1zM232 651h1v1h-1zM235 650h1v2h-1zM237 657h1v3h-1zM239 649h1v3h-1zM323 472h1v3h-1zM323 481h1v1h-1zM327 492h1v1h-1zM329 496h1v1h-1zM331 493h1v3h-1zM331 501h1v2h-1zM333 506h1v1h-1zM336 505h1v3h-1zM336 513h1v1h-1zM337 509h1v1h-1zM339 513h1v1h-1zM341 517h1v1h-1zM342 518h1v2h-1zM343 527h1v2h-1zM347 534h1v1h-1zM349 531h1v2h-1zM352 542h1v2h-1zM354 545h1v1h-1zM355 541h1v1h-1zM356 547h1v1h-1zM357 542h1v2h-1zM357 549h1v3h-1zM358 543h1v3h-1zM358 550h1v2h-1zM361 548h1v2h-1zM362 550h1v1h-1zM363 550h1v2h-1zM366 560h1v3h-1zM367 554h1v2h-1zM369 564h1v2h-1zM370 565h1v2h-1zM371 566h1v2h-1zM372 560h1v1h-1zM372 567h1v3h-1zM374 569h1v3h-1zM378 574h1v2h-1zM381 570h1v3h-1zM382 580h1v1h-1zM386 582h1v2h-1zM388 583h1v2h-1zM390 584h1v1h-1zM392 579h1v1h-1zM393 580h1v1h-1zM401 585h1v3h-1zM403 586h1v3h-1zM405 588h1v2h-1zM405 595h1v2h-1zM424 608h1v2h-1zM425 602h1v1h-1zM425 609h1v1h-1zM428 609h1v2h-1zM433 605h1v1h-1zM433 611h1v1h-1zM434 605h1v1h-1zM436 605h1v3h-1zM437 608h1v1h-1zM439 607h1v3h-1zM440 615h1v3h-1zM442 616h1v2h-1zM443 609h1v2h-1zM443 616h1v3h-1zM447 612h1v2h-1zM449 613h1v2h-1zM452 622h1v3h-1zM456 618h1v1h-1zM457 618h1v1h-1zM459 617h1v3h-1zM460 625h1v2h-1zM461 626h1v1h-1zM462 627h1v1h-1zM463 628h1v3h-1zM465 621h1v2h-1zM466 622h1v1h-1zM468 623h1v1h-1zM470 622h1v1h-1zM471 622h1v1h-1zM474 620h1v3h-1zM474 628h1v3h-1zM476 620h1v3h-1zM477 622h1v2h-1zM478 623h1v1h-1zM479 623h1v1h-1zM479 629h1v1h-1zM480 621h1v3h-1zM480 629h1v1h-1zM481 622h1v2h-1zM483 622h1v2h-1zM483 630h1v3h-1zM485 622h1v3h-1zM486 623h1v2h-1zM489 632h1v3h-1zM490 626h1v1h-1zM490 632h1v2h-1zM491 626h1v1h-1zM491 632h1v2h-1zM492 632h1v1h-1zM493 633h1v2h-1zM494 625h1v3h-1zM495 631h1v1h-1zM496 631h1v1h-1zM499 625h1v1h-1zM501 624h1v3h-1zM503 632h1v3h-1zM504 624h1v3h-1zM505 625h1v2h-1zM508 625h1v2h-1zM514 634h1v3h-1zM515 626h1v3h-1zM516 635h1v1h-1zM520 635h1v2h-1zM523 628h1v3h-1zM523 636h1v3h-1zM524 628h1v3h-1zM526 628h1v3h-1zM526 636h1v1h-1zM527 637h1v1h-1zM532 630h1v2h-1zM533 637h1v2h-1zM537 629h1v1h-1zM537 636h1v3h-1zM539 628h1v2h-1zM541 626h1v3h-1zM542 628h1v1h-1zM544 625h1v3h-1zM545 633h1v3h-1zM546 626h1v1h-1zM550 631h1v1h-1zM553 625h1v1h-1zM553 631h1v2h-1zM554 633h1v1h-1zM558 632h1v2h-1zM560 631h1v3h-1zM561 625h1v1h-1zM563 631h1v2h-1zM564 623h1v2h-1zM564 630h1v2h-1zM565 624h1v1h-1zM566 621h1v3h-1zM567 622h1v2h-1zM568 624h1v1h-1zM569 631h1v3h-1zM570 631h1v3h-1zM574 626h1v1h-1zM576 627h1v1h-1zM577 633h1v2h-1zM578 626h1v2h-1zM578 634h1v3h-1zM580 634h1v1h-1zM581 627h1v1h-1zM582 634h1v2h-1zM583 634h1v1h-1zM586 627h1v2h-1zM590 629h1v3h-1zM590 637h1v3h-1zM594 631h1v1h-1zM596 631h1v1h-1zM598 637h1v1h-1zM599 637h1v1h-1zM600 637h1v3h-1zM602 629h1v3h-1zM604 631h1v1h-1zM605 638h1v1h-1zM607 640h1v3h-1zM609 632h1v2h-1zM613 640h1v3h-1zM615 632h1v3h-1zM617 632h1v3h-1zM617 640h1v2h-1zM620 640h1v3h-1zM622 640h1v1h-1zM624 632h1v3h-1zM624 641h1v1h-1zM627 641h1v2h-1zM628 635h1v1h-1zM630 635h1v3h-1zM630 643h1v3h-1zM631 636h1v2h-1zM632 635h1v3h-1zM633 637h1v1h-1zM633 643h1v3h-1zM635 644h1v2h-1zM636 644h1v3h-1zM637 637h1v2h-1zM638 644h1v2h-1zM639 645h1v3h-1zM640 638h1v1h-1zM640 644h1v3h-1zM641 636h1v3h-1zM647 638h1v2h-1zM647 645h1v2h-1zM648 639h1v1h-1zM649 637h1v3h-1zM649 645h1v2h-1zM652 640h1v1h-1zM652 646h1v3h-1zM653 638h1v3h-1zM654 646h1v1h-1zM657 638h1v3h-1zM666 642h1v2h-1zM666 649h1v1h-1zM667 649h1v2h-1zM668 642h1v2h-1zM672 649h1v3h-1zM674 642h1v2h-1zM678 639h1v3h-1zM678 648h1v2h-1zM679 648h1v3h-1zM680 648h1v3h-1zM681 642h1v2h-1zM684 649h1v1h-1zM686 642h1v2h-1zM688 641h1v3h-1zM689 649h1v1h-1zM690 642h1v2h-1zM696 643h1v1h-1zM698 649h1v2h-1zM699 642h1v3h-1zM700 643h1v2h-1zM701 643h1v1h-1zM702 650h1v1h-1zM703 642h1v3h-1zM707 651h1v2h-1zM708 651h1v3h-1zM709 651h1v2h-1zM710 652h1v1h-1zM711 652h1v1h-1zM712 646h1v1h-1zM712 652h1v2h-1zM713 652h1v2h-1zM714 646h1v1h-1zM715 652h1v1h-1zM717 646h1v1h-1zM718 644h1v3h-1zM718 652h1v2h-1zM722 648h1v1h-1zM724 646h1v3h-1zM724 654h1v1h-1zM726 647h1v2h-1zM731 655h1v3h-1zM733 648h1v1h-1zM734 647h1v2h-1zM735 647h1v2h-1zM738 655h1v1h-1zM739 655h1v1h-1zM744 654h1v2h-1zM745 647h1v2h-1zM748 654h1v1h-1zM749 647h1v2h-1zM750 648h1v1h-1zM751 646h1v3h-1zM752 648h1v2h-1zM756 649h1v2h-1zM756 656h1v1h-1zM757 650h1v1h-1zM758 650h1v1h-1zM758 656h1v2h-1zM759 656h1v2h-1zM760 650h1v1h-1zM761 656h1v3h-1zM763 648h1v3h-1zM766 648h1v1h-1zM772 649h1v1h-1zM775 649h1v2h-1zM776 649h1v2h-1zM777 649h1v3h-1zM777 657h1v1h-1zM785 650h1v2h-1zM786 649h1v3h-1zM787 651h1v1h-1zM787 657h1v3h-1zM790 649h1v3h-1zM791 649h1v3h-1zM796 649h1v2h-1zM796 656h1v1h-1zM799 657h1v2h-1zM803 649h1v2h-1zM803 656h1v1h-1zM804 656h1v3h-1zM808 648h1v3h-1zM813 657h1v2h-1zM815 657h1v1h-1zM816 656h1v2h-1zM817 649h1v2h-1zM820 658h1v3h-1zM821 652h1v1h-1zM822 658h1v3h-1zM823 651h1v2h-1zM824 658h1v1h-1zM825 658h1v2h-1zM827 650h1v3h-1zM829 652h1v1h-1zM829 658h1v1h-1zM831 650h1v3h-1zM831 658h1v1h-1zM836 658h1v1h-1zM844 658h1v1h-1zM846 659h1v2h-1zM851 653h1v1h-1zM853 659h1v3h-1zM855 650h1v3h-1zM856 651h1v2h-1zM856 658h1v1h-1zM857 658h1v2h-1zM858 658h1v3h-1zM859 658h1v2h-1zM863 652h1v1h-1zM863 658h1v3h-1zM864 652h1v1h-1zM864 658h1v3h-1zM868 658h1v1h-1zM870 650h1v2h-1zM871 650h1v2h-1zM872 649h1v3h-1zM875 651h1v1h-1zM876 657h1v3h-1zM877 651h1v1h-1zM878 657h1v2h-1zM881 652h1v2h-1zM884 659h1v1h-1zM885 653h1v1h-1zM885 659h1v2h-1zM887 649h1v3h-1zM887 657h1v2h-1zM888 657h1v1h-1zM890 658h1v2h-1zM891 650h1v3h-1zM892 652h1v1h-1zM893 650h1v3h-1zM893 658h1v1h-1zM895 652h1v1h-1zM896 649h1v3h-1zM898 649h1v3h-1zM901 649h1v3h-1zM903 651h1v1h-1zM905 651h1v1h-1zM905 657h1v3h-1zM906 657h1v2h-1zM907 657h1v2h-1zM908 657h1v2h-1zM910 649h1v3h-1zM910 657h1v3h-1zM911 657h1v2h-1zM912 659h1v1h-1zM914 651h1v3h-1zM914 659h1v3h-1zM919 653h1v1h-1zM919 659h1v1h-1zM921 650h1v2h-1zM923 651h1v1h-1zM926 657h1v1h-1zM928 649h1v3h-1zM928 657h1v3h-1zM930 649h1v3h-1zM933 650h1v2h-1zM935 651h1v1h-1zM936 657h1v3h-1zM937 652h1v1h-1zM937 658h1v1h-1zM938 651h1v2h-1zM940 658h1v1h-1zM941 650h1v3h-1zM941 658h1v1h-1zM943 659h1v1h-1zM944 659h1v3h-1zM948 658h1v1h-1zM950 658h1v2h-1zM951 650h1v3h-1zM953 657h1v2h-1zM954 649h1v3h-1zM954 657h1v1h-1zM956 657h1v2h-1zM958 650h1v2h-1zM961 649h1v3h-1zM961 657h1v2h-1zM966 659h1v2h-1zM968 652h1v2h-1zM970 657h1v3h-1zM971 657h1v3h-1zM972 657h1v3h-1zM973 657h1v2h-1zM975 651h1v1h-1zM976 657h1v3h-1zM978 652h1v1h-1zM979 650h1v3h-1zM979 658h1v3h-1zM980 651h1v2h-1zM980 658h1v3h-1zM981 652h1v1h-1zM981 658h1v1h-1zM983 651h1v2h-1zM985 658h1v3h-1zM986 652h1v1h-1zM990 651h1v2h-1zM990 658h1v3h-1zM991 658h1v1h-1zM992 652h1v1h-1zM992 658h1v3h-1zM994 658h1v2h-1zM995 652h1v1h-1zM996 651h1v2h-1zM997 658h1v3h-1zM998 658h1v1h-1zM1000 658h1v1h-1zM1002 652h1v1h-1zM1003 651h1v2h-1zM1003 658h1v2h-1zM1004 652h1v1h-1zM1006 651h1v2h-1zM1007 658h1v1h-1zM1008 652h1v1h-1zM1009 650h1v3h-1zM1010 657h1v1h-1zM1011 657h1v3h-1zM1012 657h1v1h-1zM1013 651h1v1h-1zM1015 650h1v2h-1zM1015 657h1v2h-1zM1020 649h1v3h-1zM1020 658h1v1h-1z"/><path fill="#00f4f4" d="M21 652h1v5h-1zM22 652h1v5h-1zM23 652h1v5h-1zM24 653h1v5h-1zM25 653h1v5h-1zM26 651h1v5h-1zM27 651h1v5h-1zM28 651h1v5h-1zM29 651h1v5h-1zM30 651h1v5h-1zM31 651h1v5h-1zM32 651h1v5h-1zM33 651h1v5h-1zM34 651h1v5h-1zM35 651h1v5h-1zM36 651h1v5h-1zM37 652h1v5h-1zM38 652h1v5h-1zM39 652h1v5h-1zM40 652h1v5h-1zM41 652h1v5h-1zM42 652h1v5h-1zM43 651h1v5h-1zM44 651h1v5h-1zM45 651h1v5h-1zM46 651h1v5h-1zM47 651h1v5h-1zM48 651h1v5h-1zM49 651h1v5h-1zM50 651h1v5h-1zM51 651h1v5h-1zM52 652h1v5h-1zM53 652h1v5h-1zM54 652h1v5h-1zM55 652h1v5h-1zM56 652h1v5h-1zM57 652h1v5h-1zM58 652h1v5h-1zM59 652h1v5h-1zM60 652h1v5h-1zM61 651h1v5h-1zM62 651h1v5h-1zM63 651h1v5h-1zM64 651h1v5h-1zM65 651h1v5h-1zM66 651h1v5h-1zM67 651h1v5h-1zM68 652h1v5h-1zM69 652h1v5h-1zM70 652h1v5h-1zM71 652h1v5h-1zM72 652h1v5h-1zM73 652h1v5h-1zM74 652h1v5h-1zM75 652h1v5h-1zM76 652h1v5h-1zM77 652h1v5h-1zM78 652h1v5h-1zM79 652h1v5h-1zM80 652h1v5h-1zM81 652h1v5h-1zM82 652h1v5h-1zM83 653h1v5h-1zM84 653h1v5h-1zM85 651h1v5h-1zM86 651h1v5h-1zM87 651h1v5h-1zM88 651h1v5h-1zM89 651h1v5h-1zM90 651h1v5h-1zM91 651h1v5h-1zM92 651h1v5h-1zM93 651h1v5h-1zM94 651h1v5h-1zM95 651h1v5h-1zM96 651h1v5h-1zM97 651h1v5h-1zM98 651h1v5h-1zM99 652h1v5h-1zM100 652h1v5h-1zM101 652h1v5h-1zM102 652h1v5h-1zM103 652h1v5h-1zM104 652h1v5h-1zM105 652h1v5h-1zM106 652h1v5h-1zM107 652h1v5h-1zM108 652h1v5h-1zM109 652h1v5h-1zM110 652h1v5h-1zM111 652h1v5h-1zM112 653h1v5h-1zM113 653h1v5h-1zM114 653h1v5h-1zM115 653h1v5h-1zM116 653h1v5h-1zM117 653h1v5h-1zM118 653h1v5h-1zM119 653h1v5h-1zM120 653h1v5h-1zM121 652h1v5h-1zM122 652h1v5h-1zM123 652h1v5h-1zM124 652h1v5h-1zM125 652h1v5h-1zM126 652h1v5h-1zM127 653h1v5h-1zM128 653h1v5h-1zM129 653h1v5h-1zM130 652h1v5h-1zM131 652h1v5h-1zM132 652h1v5h-1zM133 652h1v5h-1zM134 652h1v5h-1zM135 652h1v5h-1zM136 652h1v5h-1zM137 652h1v5h-1zM138 652h1v5h-1zM139 652h1v5h-1zM140 652h1v5h-1zM141 652h1v5h-1zM142 652h1v5h-1zM143 652h1v5h-1zM144 652h1v5h-1zM145 652h1v5h-1zM146 652h1v5h-1zM147 652h1v5h-1zM148 652h1v5h-1zM149 652h1v5h-1zM150 652h1v5h-1zM151 652h1v5h-1zM152 652h1v5h-1zM153 652h1v5h-1zM154 653h1v5h-1zM155 653h1v5h-1zM156 653h1v5h-1zM157 653h1v5h-1zM158 653h1v5h-1zM159 653h1v5h-1zM160 653h1v5h-1zM161 653h1v5h-1zM162 653h1v5h-1zM163 653h1v5h-1zM164 653h1v5h-1zM165 653h1v5h-1zM166 652h1v5h-1zM167 652h1v5h-1zM168 652h1v5h-1zM169 652h1v5h-1zM170 652h1v5h-1zM171 652h1v5h-1zM172 652h1v5h-1zM173 652h1v5h-1zM174 651h1v5h-1zM175 651h1v5h-1zM176 651h1v5h-1zM177 651h1v5h-1zM178 651h1v5h-1zM179 651h1v5h-1zM180 651h1v5h-1zM181 651h1v5h-1zM182 651h1v5h-1zM183 653h1v5h-1zM184 653h1v5h-1zM185 653h1v5h-1zM186 653h1v5h-1zM187 653h1v5h-1zM188 653h1v5h-1zM189 653h1v5h-1zM190 653h1v5h-1zM191 652h1v5h-1zM192 652h1v5h-1zM193 652h1v5h-1zM194 652h1v5h-1zM195 653h1v5h-1zM196 653h1v5h-1zM197 653h1v5h-1zM198 653h1v5h-1zM199 653h1v5h-1zM200 653h1v5h-1zM201 653h1v5h-1zM202 653h1v5h-1zM203 652h1v5h-1zM204 652h1v5h-1zM205 652h1v5h-1zM206 652h1v5h-1zM207 652h1v5h-1zM208 652h1v5h-1zM209 652h1v5h-1zM210 652h1v5h-1zM211 652h1v5h-1zM212 652h1v5h-1zM213 652h1v5h-1zM214 652h1v5h-1zM215 652h1v5h-1zM216 652h1v5h-1zM217 652h1v5h-1zM218 652h1v5h-1zM219 652h1v5h-1zM220 652h1v5h-1zM221 652h1v5h-1zM222 652h1v5h-1zM223 652h1v5h-1zM224 652h1v5h-1zM225 653h1v5h-1zM226 653h1v5h-1zM227 653h1v5h-1zM228 653h1v5h-1zM229 653h1v5h-1zM230 653h1v5h-1zM231 652h1v5h-1zM232 652h1v5h-1zM233 652h1v5h-1zM234 652h1v5h-1zM235 652h1v5h-1zM236 652h1v5h-1zM237 652h1v5h-1zM238 652h1v5h-1zM239 652h1v5h-1zM270 236h1v6h-1zM271 235h1v6h-1zM272 235h1v6h-1zM273 238h1v5h-1zM274 238h1v6h-1zM322 472h1v6h-1zM323 475h1v6h-1zM324 478h1v6h-1zM325 481h1v6h-1zM326 484h1v5h-1zM327 486h1v6h-1zM328 489h1v5h-1zM329 491h1v5h-1zM330 493h1v6h-1zM331 496h1v5h-1zM332 498h1v6h-1zM333 501h1v5h-1zM334 503h1v5h-1zM335 505h1v6h-1zM336 508h1v5h-1zM337 510h1v5h-1zM338 512h1v5h-1zM339 514h1v5h-1zM340 516h1v5h-1zM341 518h1v5h-1zM342 520h1v5h-1zM343 522h1v5h-1zM344 524h1v5h-1zM345 526h1v4h-1zM346 527h1v5h-1zM347 529h1v5h-1zM348 531h1v5h-1zM349 533h1v4h-1zM350 534h1v5h-1zM351 536h1v4h-1zM352 537h1v5h-1zM353 539h1v4h-1zM354 540h1v5h-1zM355 542h1v4h-1zM356 543h1v4h-1zM357 544h1v5h-1zM358 546h1v4h-1zM359 547h1v5h-1zM360 549h1v4h-1zM361 550h1v4h-1zM362 551h1v6h-1zM363 552h1v5h-1zM364 552h1v6h-1zM365 555h1v4h-1zM366 556h1v4h-1zM367 556h1v6h-1zM368 558h1v5h-1zM369 558h1v6h-1zM370 561h1v4h-1zM371 560h1v6h-1zM372 561h1v6h-1zM373 562h1v6h-1zM374 563h1v6h-1zM375 564h1v6h-1zM376 565h1v6h-1zM377 566h1v7h-1zM378 568h1v6h-1zM379 569h1v6h-1zM380 572h1v6h-1zM381 573h1v6h-1zM382 574h1v6h-1zM383 574h1v5h-1zM384 574h1v6h-1zM385 575h1v6h-1zM386 576h1v6h-1zM387 577h1v6h-1zM388 578h1v5h-1zM389 578h1v6h-1zM390 578h1v6h-1zM391 579h1v6h-1zM392 580h1v6h-1zM393 581h1v5h-1zM394 581h1v6h-1zM395 582h1v6h-1zM396 584h1v6h-1zM397 585h1v5h-1zM398 585h1v6h-1zM399 586h1v6h-1zM400 587h1v6h-1zM401 588h1v5h-1zM402 588h1v6h-1zM403 589h1v5h-1zM404 589h1v6h-1zM405 590h1v5h-1zM406 590h1v6h-1zM407 591h1v5h-1zM408 591h1v6h-1zM409 592h1v5h-1zM410 592h1v6h-1zM411 593h1v6h-1zM412 594h1v5h-1zM413 594h1v6h-1zM414 595h1v6h-1zM415 596h1v5h-1zM416 596h1v6h-1zM417 597h1v6h-1zM418 598h1v5h-1zM419 598h1v6h-1zM420 599h1v6h-1zM421 601h1v5h-1zM422 601h1v6h-1zM423 602h1v5h-1zM424 602h1v6h-1zM425 603h1v6h-1zM426 604h1v5h-1zM427 603h1v6h-1zM428 604h1v5h-1zM429 604h1v6h-1zM430 605h1v6h-1zM431 606h1v5h-1zM432 606h1v6h-1zM433 606h1v5h-1zM434 606h1v6h-1zM435 607h1v5h-1zM436 608h1v6h-1zM437 609h1v5h-1zM438 609h1v6h-1zM439 610h1v5h-1zM440 609h1v6h-1zM441 610h1v5h-1zM442 610h1v6h-1zM443 611h1v5h-1zM444 611h1v6h-1zM445 612h1v5h-1zM446 613h1v6h-1zM447 614h1v5h-1zM448 614h1v6h-1zM449 615h1v5h-1zM450 615h1v6h-1zM451 616h1v5h-1zM452 616h1v6h-1zM453 617h1v5h-1zM454 617h1v6h-1zM455 618h1v6h-1zM456 619h1v5h-1zM457 619h1v5h-1zM458 619h1v6h-1zM459 620h1v5h-1zM460 620h1v5h-1zM461 620h1v6h-1zM462 622h1v5h-1zM463 622h1v6h-1zM464 623h1v5h-1zM465 623h1v5h-1zM466 623h1v6h-1zM467 624h1v5h-1zM468 624h1v5h-1zM469 623h1v5h-1zM470 623h1v5h-1zM471 623h1v5h-1zM472 623h1v5h-1zM473 623h1v5h-1zM474 623h1v5h-1zM475 623h1v5h-1zM476 623h1v6h-1zM477 624h1v5h-1zM478 624h1v5h-1zM479 624h1v5h-1zM480 624h1v5h-1zM481 624h1v5h-1zM482 624h1v5h-1zM483 624h1v6h-1zM484 625h1v5h-1zM485 625h1v5h-1zM486 625h1v5h-1zM487 626h1v5h-1zM488 626h1v6h-1zM489 627h1v5h-1zM490 627h1v5h-1zM491 627h1v5h-1zM492 627h1v5h-1zM493 627h1v6h-1zM494 628h1v5h-1zM495 626h1v5h-1zM496 626h1v5h-1zM497 626h1v5h-1zM498 626h1v5h-1zM499 626h1v6h-1zM500 627h1v5h-1zM501 627h1v5h-1zM502 627h1v5h-1zM503 627h1v5h-1zM504 627h1v5h-1zM505 627h1v5h-1zM506 627h1v5h-1zM507 627h1v5h-1zM508 627h1v5h-1zM509 627h1v6h-1zM510 628h1v5h-1zM511 628h1v5h-1zM512 628h1v5h-1zM513 628h1v5h-1zM514 629h1v5h-1zM515 629h1v5h-1zM516 629h1v6h-1zM517 630h1v5h-1zM518 630h1v5h-1zM519 630h1v5h-1zM520 630h1v5h-1zM521 630h1v5h-1zM522 630h1v6h-1zM523 631h1v5h-1zM524 631h1v5h-1zM525 631h1v5h-1zM526 631h1v5h-1zM527 632h1v5h-1zM528 632h1v5h-1zM529 632h1v6h-1zM530 633h1v5h-1zM531 632h1v6h-1zM532 632h1v5h-1zM533 632h1v5h-1zM534 631h1v6h-1zM535 631h1v5h-1zM536 631h1v5h-1zM537 630h1v6h-1zM538 630h1v5h-1zM539 630h1v5h-1zM540 629h1v6h-1zM541 629h1v5h-1zM542 629h1v5h-1zM543 629h1v5h-1zM544 628h1v5h-1zM545 628h1v5h-1zM546 627h1v6h-1zM547 627h1v5h-1zM548 627h1v5h-1zM549 626h1v5h-1zM550 626h1v5h-1zM551 626h1v5h-1zM552 626h1v5h-1zM553 626h1v5h-1zM554 627h1v6h-1zM555 627h1v5h-1zM556 627h1v5h-1zM557 627h1v5h-1zM558 627h1v5h-1zM559 626h1v6h-1zM560 626h1v5h-1zM561 626h1v5h-1zM562 626h1v5h-1zM563 625h1v6h-1zM564 625h1v5h-1zM565 625h1v5h-1zM566 624h1v5h-1zM567 624h1v6h-1zM568 625h1v5h-1zM569 625h1v6h-1zM570 626h1v5h-1zM571 625h1v5h-1zM572 625h1v6h-1zM573 627h1v5h-1zM574 627h1v6h-1zM575 628h1v5h-1zM576 628h1v5h-1zM577 628h1v5h-1zM578 628h1v6h-1zM579 629h1v5h-1zM580 629h1v5h-1zM581 628h1v5h-1zM582 628h1v6h-1zM583 629h1v5h-1zM584 629h1v5h-1zM585 629h1v5h-1zM586 629h1v5h-1zM587 629h1v6h-1zM588 631h1v5h-1zM589 631h1v5h-1zM590 632h1v5h-1zM591 632h1v5h-1zM592 632h1v5h-1zM593 632h1v5h-1zM594 632h1v6h-1zM595 632h1v5h-1zM596 632h1v5h-1zM597 632h1v5h-1zM598 632h1v5h-1zM599 631h1v6h-1zM600 632h1v5h-1zM601 632h1v5h-1zM602 632h1v5h-1zM603 632h1v5h-1zM604 632h1v6h-1zM605 633h1v5h-1zM606 633h1v5h-1zM607 635h1v5h-1zM608 635h1v5h-1zM609 634h1v6h-1zM610 635h1v5h-1zM611 635h1v5h-1zM612 635h1v5h-1zM613 635h1v5h-1zM614 635h1v5h-1zM615 635h1v5h-1zM616 635h1v6h-1zM617 635h1v5h-1zM618 635h1v5h-1zM619 635h1v5h-1zM620 635h1v5h-1zM621 635h1v5h-1zM622 635h1v5h-1zM623 635h1v5h-1zM624 635h1v6h-1zM625 636h1v5h-1zM626 636h1v5h-1zM627 636h1v5h-1zM628 636h1v5h-1zM629 637h1v6h-1zM630 638h1v5h-1zM631 638h1v5h-1zM632 638h1v5h-1zM633 638h1v5h-1zM634 638h1v6h-1zM635 639h1v5h-1zM636 639h1v5h-1zM637 639h1v5h-1zM638 639h1v5h-1zM639 639h1v6h-1zM640 639h1v5h-1zM641 639h1v5h-1zM642 639h1v5h-1zM643 639h1v5h-1zM644 639h1v5h-1zM645 639h1v6h-1zM646 640h1v5h-1zM647 640h1v5h-1zM648 640h1v5h-1zM649 640h1v5h-1zM650 641h1v5h-1zM651 641h1v5h-1zM652 641h1v5h-1zM653 641h1v5h-1zM654 641h1v5h-1zM655 640h1v6h-1zM656 641h1v5h-1zM657 641h1v5h-1zM658 641h1v5h-1zM659 641h1v5h-1zM660 641h1v5h-1zM661 641h1v5h-1zM662 641h1v5h-1zM663 643h1v5h-1zM664 643h1v5h-1zM665 643h1v6h-1zM666 644h1v5h-1zM667 644h1v5h-1zM668 644h1v5h-1zM669 644h1v5h-1zM670 644h1v5h-1zM671 644h1v5h-1zM672 644h1v5h-1zM673 644h1v5h-1zM674 644h1v5h-1zM675 644h1v5h-1zM676 642h1v5h-1zM677 642h1v5h-1zM678 642h1v6h-1zM679 643h1v5h-1zM680 643h1v5h-1zM681 644h1v5h-1zM682 644h1v5h-1zM683 644h1v5h-1zM684 644h1v5h-1zM685 644h1v5h-1zM686 644h1v5h-1zM687 644h1v5h-1zM688 644h1v5h-1zM689 644h1v5h-1zM690 644h1v6h-1zM691 645h1v5h-1zM692 645h1v5h-1zM693 644h1v5h-1zM694 644h1v5h-1zM695 644h1v5h-1zM696 644h1v5h-1zM697 644h1v5h-1zM698 644h1v5h-1zM699 645h1v5h-1zM700 645h1v5h-1zM701 644h1v6h-1zM702 645h1v5h-1zM703 645h1v5h-1zM704 645h1v5h-1zM705 645h1v5h-1zM706 646h1v5h-1zM707 646h1v5h-1zM708 646h1v5h-1zM709 646h1v5h-1zM710 646h1v6h-1zM711 647h1v5h-1zM712 647h1v5h-1zM713 647h1v5h-1zM714 647h1v5h-1zM715 647h1v5h-1zM716 647h1v5h-1zM717 647h1v5h-1zM718 647h1v5h-1zM719 647h1v6h-1zM720 648h1v5h-1zM721 648h1v5h-1zM722 649h1v5h-1zM723 649h1v5h-1zM724 649h1v5h-1zM725 649h1v5h-1zM726 649h1v5h-1zM727 649h1v5h-1zM728 649h1v5h-1zM729 649h1v6h-1zM730 650h1v5h-1zM731 650h1v5h-1zM732 649h1v5h-1zM733 649h1v5h-1zM734 649h1v5h-1zM735 649h1v5h-1zM736 650h1v5h-1zM737 650h1v5h-1zM738 650h1v5h-1zM739 650h1v5h-1zM740 649h1v5h-1zM741 649h1v5h-1zM742 649h1v5h-1zM743 649h1v5h-1zM744 649h1v5h-1zM745 649h1v5h-1zM746 649h1v5h-1zM747 648h1v6h-1zM748 649h1v5h-1zM749 649h1v5h-1zM750 649h1v5h-1zM751 649h1v5h-1zM752 650h1v5h-1zM753 650h1v5h-1zM754 650h1v5h-1zM755 650h1v5h-1zM756 651h1v5h-1zM757 651h1v5h-1zM758 651h1v5h-1zM759 651h1v5h-1zM760 651h1v5h-1zM761 651h1v5h-1zM762 651h1v5h-1zM763 651h1v5h-1zM764 651h1v5h-1zM765 649h1v5h-1zM766 649h1v5h-1zM767 649h1v5h-1zM768 649h1v5h-1zM769 649h1v5h-1zM770 650h1v5h-1zM771 650h1v5h-1zM772 650h1v6h-1zM773 651h1v5h-1zM774 651h1v5h-1zM775 651h1v5h-1zM776 651h1v5h-1zM777 652h1v5h-1zM778 652h1v5h-1zM779 651h1v5h-1zM780 651h1v5h-1zM781 651h1v5h-1zM782 651h1v5h-1zM783 651h1v5h-1zM784 651h1v5h-1zM785 652h1v5h-1zM786 652h1v5h-1zM787 652h1v5h-1zM788 652h1v5h-1zM789 652h1v5h-1zM790 652h1v5h-1zM791 652h1v5h-1zM792 652h1v5h-1zM793 652h1v5h-1zM794 651h1v5h-1zM795 651h1v5h-1zM796 651h1v5h-1zM797 651h1v6h-1zM798 652h1v5h-1zM799 652h1v5h-1zM800 652h1v5h-1zM801 651h1v5h-1zM802 651h1v5h-1zM803 651h1v5h-1zM804 651h1v5h-1zM805 651h1v5h-1zM806 651h1v5h-1zM807 651h1v5h-1zM808 651h1v5h-1zM809 651h1v5h-1zM810 652h1v5h-1zM811 652h1v5h-1zM812 652h1v5h-1zM813 652h1v5h-1zM814 652h1v5h-1zM815 652h1v5h-1zM816 651h1v5h-1zM817 651h1v5h-1zM818 651h1v5h-1zM819 653h1v5h-1zM820 653h1v5h-1zM821 653h1v5h-1zM822 653h1v5h-1zM823 653h1v5h-1zM824 653h1v5h-1zM825 653h1v5h-1zM826 653h1v5h-1zM827 653h1v5h-1zM828 653h1v5h-1zM829 653h1v5h-1zM830 653h1v5h-1zM831 653h1v5h-1zM832 653h1v5h-1zM833 653h1v5h-1zM834 653h1v5h-1zM835 653h1v5h-1zM836 653h1v5h-1zM837 653h1v5h-1zM838 653h1v5h-1zM839 653h1v5h-1zM840 653h1v5h-1zM841 653h1v5h-1zM842 653h1v5h-1zM843 653h1v5h-1zM844 653h1v5h-1zM845 653h1v6h-1zM846 654h1v5h-1zM847 654h1v5h-1zM848 654h1v5h-1zM849 654h1v5h-1zM850 654h1v5h-1zM851 654h1v5h-1zM852 654h1v5h-1zM853 654h1v5h-1zM854 654h1v5h-1zM855 653h1v5h-1zM856 653h1v5h-1zM857 653h1v5h-1zM858 653h1v5h-1zM859 653h1v5h-1zM860 653h1v5h-1zM861 653h1v5h-1zM862 653h1v5h-1zM863 653h1v5h-1zM864 653h1v5h-1zM865 653h1v5h-1zM866 653h1v5h-1zM867 653h1v5h-1zM868 653h1v5h-1zM869 653h1v5h-1zM870 652h1v5h-1zM871 652h1v5h-1zM872 652h1v5h-1zM873 652h1v5h-1zM874 652h1v5h-1zM875 652h1v5h-1zM876 652h1v5h-1zM877 652h1v5h-1zM878 652h1v5h-1zM879 652h1v5h-1zM880 652h1v5h-1zM881 654h1v5h-1zM882 654h1v5h-1zM883 654h1v5h-1zM884 654h1v5h-1zM885 654h1v5h-1zM886 654h1v5h-1zM887 652h1v5h-1zM888 652h1v5h-1zM889 653h1v5h-1zM890 653h1v5h-1zM891 653h1v5h-1zM892 653h1v5h-1zM893 653h1v5h-1zM894 653h1v5h-1zM895 653h1v5h-1zM896 652h1v5h-1zM897 652h1v5h-1zM898 652h1v5h-1zM899 652h1v5h-1zM900 652h1v5h-1zM901 652h1v5h-1zM902 652h1v5h-1zM903 652h1v5h-1zM904 652h1v5h-1zM905 652h1v5h-1zM906 652h1v5h-1zM907 652h1v5h-1zM908 652h1v5h-1zM909 652h1v5h-1zM910 652h1v5h-1zM911 652h1v5h-1zM912 654h1v5h-1zM913 654h1v5h-1zM914 654h1v5h-1zM915 654h1v5h-1zM916 654h1v5h-1zM917 654h1v5h-1zM918 654h1v5h-1zM919 654h1v5h-1zM920 654h1v5h-1zM921 652h1v5h-1zM922 652h1v5h-1zM923 652h1v5h-1zM924 652h1v5h-1zM925 652h1v5h-1zM926 652h1v5h-1zM927 652h1v5h-1zM928 652h1v5h-1zM929 652h1v5h-1zM930 652h1v5h-1zM931 652h1v5h-1zM932 652h1v5h-1zM933 652h1v5h-1zM934 652h1v5h-1zM935 652h1v5h-1zM936 652h1v5h-1zM937 653h1v5h-1zM938 653h1v5h-1zM939 653h1v5h-1zM940 653h1v5h-1zM941 653h1v5h-1zM942 654h1v5h-1zM943 654h1v5h-1zM944 654h1v5h-1zM945 654h1v5h-1zM946 654h1v5h-1zM947 654h1v5h-1zM948 653h1v5h-1zM949 653h1v5h-1zM950 653h1v5h-1zM951 653h1v5h-1zM952 652h1v5h-1zM953 652h1v5h-1zM954 652h1v5h-1zM955 652h1v5h-1zM956 652h1v5h-1zM957 652h1v5h-1zM958 652h1v5h-1zM959 652h1v5h-1zM960 652h1v5h-1zM961 652h1v5h-1zM962 652h1v5h-1zM963 652h1v5h-1zM964 652h1v5h-1zM965 652h1v5h-1zM966 654h1v5h-1zM967 654h1v5h-1zM968 654h1v5h-1zM969 654h1v5h-1zM970 652h1v5h-1zM971 652h1v5h-1zM972 652h1v5h-1zM973 652h1v5h-1zM974 652h1v5h-1zM975 652h1v5h-1zM976 652h1v5h-1zM977 653h1v5h-1zM978 653h1v5h-1zM979 653h1v5h-1zM980 653h1v5h-1zM981 653h1v5h-1zM982 653h1v5h-1zM983 653h1v5h-1zM984 653h1v5h-1zM985 653h1v5h-1zM986 653h1v5h-1zM987 653h1v5h-1zM988 653h1v5h-1zM989 653h1v5h-1zM990 653h1v5h-1zM991 653h1v5h-1zM992 653h1v5h-1zM993 653h1v5h-1zM994 653h1v5h-1zM995 653h1v5h-1zM996 653h1v5h-1zM997 653h1v5h-1zM998 653h1v5h-1zM999 653h1v5h-1zM1000 653h1v5h-1zM1001 653h1v5h-1zM1002 653h1v5h-1zM1003 653h1v5h-1zM1004 653h1v5h-1zM1005 653h1v5h-1zM1006 653h1v5h-1zM1007 653h1v5h-1zM1008 653h1v5h-1zM1009 653h1v5h-1zM1010 652h1v5h-1zM1011 652h1v5h-1zM1012 652h1v5h-1zM1013 652h1v5h-1zM1014 652h1v5h-1zM1015 652h1v5h-1zM1016 652h1v5h-1zM1017 652h1v5h-1zM1018 652h1v5h-1zM1019 652h1v5h-1zM1020 652h1v6h-1z"/><path fill="#00c0c0" d="M240 651h1v5h-1zM241 647h1v6h-1zM242 643h1v6h-1zM243 639h1v6h-1zM244 635h1v6h-1zM245 626h1v11h-1zM246 610h1v18h-1zM247 593h1v18h-1zM248 570h1v25h-1zM249 544h1v28h-1zM250 518h1v28h-1zM251 494h1v26h-1zM252 470h1v26h-1zM253 449h1v23h-1zM254 427h1v24h-1zM255 405h1v24h-1zM256 382h1v25h-1zM257 360h1v24h-1zM258 341h1v20h-1zM259 323h1v19h-1zM260 313h1v11h-1zM261 303h1v11h-1zM262 293h1v11h-1zM263 284h1v11h-1zM264 275h1v11h-1zM265 265h1v12h-1zM266 256h1v11h-1zM267 250h1v7h-1zM268 245h1v7h-1zM269 240h1v7h-1zM275 240h1v5h-1zM276 244h1v5h-1zM277 247h1v5h-1zM278 251h1v7h-1zM279 256h1v7h-1zM280 261h1v7h-1zM281 266h1v7h-1zM282 271h1v7h-1zM283 277h1v7h-1zM284 282h1v7h-1zM285 287h1v8h-1zM286 293h1v7h-1zM287 298h1v8h-1zM288 304h1v8h-1zM289 310h1v8h-1zM290 316h1v8h-1zM291 322h1v9h-1zM292 329h1v8h-1zM293 335h1v8h-1zM294 341h1v9h-1zM295 348h1v9h-1zM296 355h1v9h-1zM297 362h1v9h-1zM298 369h1v9h-1zM299 376h1v8h-1zM300 382h1v7h-1zM301 387h1v6h-1zM302 392h1v6h-1zM303 396h1v7h-1zM304 401h1v6h-1zM305 405h1v6h-1zM306 409h1v5h-1zM307 412h1v6h-1zM308 416h1v5h-1zM309 420h1v6h-1zM310 425h1v6h-1zM311 430h1v7h-1zM312 435h1v7h-1zM313 440h1v7h-1zM314 445h1v6h-1zM315 449h1v6h-1zM316 453h1v6h-1zM317 457h1v5h-1zM318 460h1v5h-1zM319 463h1v6h-1zM320 467h1v5h-1zM321 470h1v5h-1z"/><path fill="#f2f2f2" d="M21 30h1v1h-1zM21 43h1v1h-1zM21 56h1v1h-1zM21 69h1v1h-1zM21 82h1v1h-1zM21 95h1v1h-1zM21 108h1v1h-1zM21 121h1v1h-1zM21 134h1v1h-1zM21 147h1v1h-1zM21 160h1v1h-1zM21 173h1v1h-1zM21 186h1v1h-1zM21 199h1v1h-1zM21 212h1v1h-1zM21 225h1v1h-1zM21 238h1v1h-1zM21 251h1v1h-1zM21 264h1v1h-1zM21 277h1v1h-1zM21 290h1v1h-1zM21 303h1v1h-1zM21 316h1v1h-1zM21 329h1v1h-1zM21 342h1v1h-1zM21 355h1v1h-1zM21 368h1v1h-1zM21 381h1v1h-1zM21 394h1v1h-1zM21 407h1v1h-1zM21 420h1v1h-1zM21 433h1v1h-1zM21 446h1v1h-1zM21 459h1v1h-1zM21 472h1v1h-1zM21 485h1v1h-1zM21 498h1v1h-1zM21 511h1v1h-1zM21 524h1v1h-1zM21 537h1v1h-1zM21 550h1v1h-1zM21 563h1v1h-1zM21 576h1v1h-1zM21 589h1v1h-1zM21 602h1v1h-1zM21 615h1v1h-1zM21 628h1v1h-1zM21 641h1v1h-1zM21 654h1v1h-1zM22 82h1v1h-1zM22 147h1v1h-1zM22 212h1v1h-1zM22 277h1v1h-1zM22 342h1v1h-1zM22 407h1v1h-1zM22 472h1v1h-1zM22 537h1v1h-1zM22 602h1v1h-1zM23 30h1v1h-1zM23 43h1v1h-1zM23 56h1v1h-1zM23 69h1v1h-1zM23 95h1v1h-1zM23 108h1v1h-1zM23 121h1v1h-1zM23 134h1v1h-1zM23 160h1v1h-1zM23 173h1v1h-1zM23 186h1v1h-1zM23 199h1v1h-1zM23 225h1v1h-1zM23 238h1v1h-1zM23 251h1v1h-1zM23 264h1v1h-1zM23 290h1v1h-1zM23 303h1v1h-1zM23 316h1v1h-1zM23 329h1v1h-1zM23 342h1v1h-1zM23 355h1v1h-1zM23 368h1v1h-1zM23 381h1v1h-1zM23 394h1v1h-1zM23 420h1v1h-1zM23 433h1v1h-1zM23 446h1v1h-1zM23 459h1v1h-1zM23 485h1v1h-1zM23 498h1v1h-1zM23 511h1v1h-1zM23 524h1v1h-1zM23 550h1v1h-1zM23 563h1v1h-1zM23 576h1v1h-1zM23 589h1v1h-1zM23 615h1v1h-1zM23 628h1v1h-1zM23 641h1v1h-1zM23 654h1v1h-1zM24 82h1v1h-1zM24 147h1v1h-1zM24 212h1v1h-1zM24 277h1v1h-1zM24 342h1v1h-1zM24 407h1v1h-1zM24 472h1v1h-1zM24 537h1v1h-1zM24 602h1v1h-1zM25 342h1v1h-1zM26 82h1v1h-1zM26 147h1v1h-1zM26 212h1v1h-1zM26 277h1v1h-1zM26 342h1v1h-1zM26 407h1v1h-1zM26 472h1v1h-1zM26 537h1v1h-1zM26 602h1v1h-1zM27 342h1v1h-1zM29 342h1v1h-1zM31 342h1v1h-1zM33 342h1v1h-1zM35 342h1v1h-1zM37 342h1v1h-1zM39 342h1v1h-1zM41 17h1v1h-1zM41 19h1v1h-1zM41 82h1v1h-1zM41 147h1v1h-1zM41 212h1v1h-1zM41 277h1v1h-1zM41 339h1v1h-1zM41 341h1v1h-1zM41 342h1v1h-1zM41 343h1v1h-1zM41 345h1v1h-1zM41 407h1v1h-1zM41 472h1v1h-1zM41 537h1v1h-1zM41 602h1v1h-1zM41 665h1v1h-1zM41 667h1v1h-1zM43 342h1v1h-1zM45 342h1v1h-1zM47 342h1v1h-1zM49 342h1v1h-1zM51 342h1v1h-1zM53 342h1v1h-1zM55 342h1v1h-1zM57 342h1v1h-1zM59 342h1v1h-1zM61 17h1v1h-1zM61 19h1v1h-1zM61 82h1v1h-1zM61 147h1v1h-1zM61 212h1v1h-1zM61 277h1v1h-1zM61 339h1v1h-1zM61 341h1v1h-1zM61 342h1v1h-1zM61 343h1v1h-1zM61 345h1v1h-1zM61 407h1v1h-1zM61 472h1v1h-1zM61 537h1v1h-1zM61 602h1v1h-1zM61 665h1v1h-1zM61 667h1v1h-1zM63 342h1v1h-1zM65 342h1v1h-1zM67 342h1v1h-1zM69 342h1v1h-1zM71 342h1v1h-1zM73 342h1v1h-1zM75 342h1v1h-1zM77 342h1v1h-1zM79 342h1v1h-1zM81 17h1v1h-1zM81 19h1v1h-1zM81 82h1v1h-1zM81 147h1v1h-1zM81 212h1v1h-1zM81 277h1v1h-1zM81 339h1v1h-1zM81 341h1v1h-1zM81 342h1v1h-1zM81 343h1v1h-1zM81 345h1v1h-1zM81 407h1v1h-1zM81 472h1v1h-1zM81 537h1v1h-1zM81 602h1v1h-1zM81 665h1v1h-1zM81 667h1v1h-1zM83 342h1v1h-1zM85 342h1v1h-1zM87 342h1v1h-1zM89 342h1v1h-1zM91 342h1v1h-1zM93 342h1v1h-1zM95 342h1v1h-1zM97 342h1v1h-1zM99 342h1v1h-1zM101 17h1v1h-1zM101 19h1v1h-1zM101 82h1v1h-1zM101 147h1v1h-1zM101 212h1v1h-1zM101 277h1v1h-1zM101 339h1v1h-1zM101 341h1v1h-1zM101 342h1v1h-1zM101 343h1v1h-1zM101 345h1v1h-1zM101 407h1v1h-1zM101 472h1v1h-1zM101 537h1v1h-1zM101 602h1v1h-1zM101 665h1v1h-1zM101 667h1v1h-1zM103 342h1v1h-1zM105 342h1v1h-1zM107 342h1v1h-1zM109 342h1v1h-1zM111 342h1v1h-1zM113 342h1v1h-1zM115 342h1v1h-1zM117 342h1v1h-1zM119 342h1v1h-1zM121 18h1v1h-1zM121 20h1v1h-1zM121 22h1v1h-1zM121 30h1v1h-1zM121 43h1v1h-1zM121 56h1v1h-1zM121 69h1v1h-1zM121 82h1v1h-1zM121 95h1v1h-1zM121 108h1v1h-1zM121 121h1v1h-1zM121 134h1v1h-1zM121 147h1v1h-1zM121 160h1v1h-1zM121 173h1v1h-1zM121 186h1v1h-1zM121 199h1v1h-1zM121 212h1v1h-1zM121 225h1v1h-1zM121 238h1v1h-1zM121 251h1v1h-1zM121 264h1v1h-1zM121 277h1v1h-1zM121 290h1v1h-1zM121 303h1v1h-1zM121 316h1v1h-1zM121 329h1v1h-1zM121 339h1v1h-1zM121 341h1v1h-1zM121 342h1v1h-1zM121 343h1v1h-1zM121 345h1v1h-1zM121 355h1v1h-1zM121 368h1v1h-1zM121 381h1v1h-1zM121 394h1v1h-1zM121 407h1v1h-1zM121 420h1v1h-1zM121 433h1v1h-1zM121 446h1v1h-1zM121 459h1v1h-1zM121 472h1v1h-1zM121 485h1v1h-1zM121 498h1v1h-1zM121 511h1v1h-1zM121 524h1v1h-1zM121 537h1v1h-1zM121 550h1v1h-1zM121 563h1v1h-1zM121 576h1v1h-1zM121 589h1v1h-1zM121 602h1v1h-1zM121 615h1v1h-1zM121 628h1v1h-1zM121 641h1v1h-1zM121 654h1v1h-1zM121 662h1v1h-1zM121 664h1v1h-1zM121 666h1v1h-1zM121 667h1v1h-1zM123 342h1v1h-1zM125 342h1v1h-1zM127 342h1v1h-1zM129 342h1v1h-1zM131 342h1v1h-1zM133 342h1v1h-1zM135 342h1v1h-1zM137 342h1v1h-1zM139 342h1v1h-1zM141 17h1v1h-1zM141 19h1v1h-1zM141 82h1v1h-1zM141 147h1v1h-1zM141 212h1v1h-1zM141 277h1v1h-1zM141 339h1v1h-1zM141 341h1v1h-1zM141 342h1v1h-1zM141 343h1v1h-1zM141 345h1v1h-1zM141 407h1v1h-1zM141 472h1v1h-1zM141 537h1v1h-1zM141 602h1v1h-1zM141 665h1v1h-1zM141 667h1v1h-1zM143 342h1v1h-1zM145 342h1v1h-1zM147 342h1v1h-1zM149 342h1v1h-1zM151 342h1v1h-1zM153 342h1v1h-1zM155 342h1v1h-1zM157 342h1v1h-1zM159 342h1v1h-1zM161 17h1v1h-1zM161 19h1v1h-1zM161 82h1v1h-1zM161 147h1v1h-1zM161 212h1v1h-1zM161 277h1v1h-1zM161 339h1v1h-1zM161 341h1v1h-1zM161 342h1v1h-1zM161 343h1v1h-1zM161 345h1v1h-1zM161 407h1v1h-1zM161 472h1v1h-1zM161 537h1v1h-1zM161 602h1v1h-1zM161 665h1v1h-1zM161 667h1v1h-1zM163 342h1v1h-1zM165 342h1v1h-1zM167 342h1v1h-1zM169 342h1v1h-1zM171 342h1v1h-1zM173 342h1v1h-1zM175 342h1v1h-1zM177 342h1v1h-1zM179 342h1v1h-1zM181 17h1v1h-1zM181 19h1v1h-1zM181 82h1v1h-1zM181 147h1v1h-1zM181 212h1v1h-1zM181 277h1v1h-1zM181 339h1v1h-1zM181 341h1v1h-1zM181 342h1v1h-1zM181 343h1v1h-1zM181 345h1v1h-1zM181 407h1v1h-1zM181 472h1v1h-1zM181 537h1v1h-1zM181 602h1v1h-1zM181 665h1v1h-1zM181 667h1v1h-1zM183 342h1v1h-1zM185 342h1v1h-1zM187 342h1v1h-1zM189 342h1v1h-1zM191 342h1v1h-1zM193 342h1v1h-1zM195 342h1v1h-1zM197 342h1v1h-1zM199 342h1v1h-1zM201 17h1v1h-1zM201 19h1v1h-1zM201 82h1v1h-1zM201 147h1v1h-1zM201 212h1v1h-1zM201 277h1v1h-1zM201 339h1v1h-1zM201 341h1v1h-1zM201 342h1v1h-1zM201 343h1v1h-1zM201 345h1v1h-1zM201 407h1v1h-1zM201 472h1v1h-1zM201 537h1v1h-1zM201 602h1v1h-1zM201 665h1v1h-1zM201 667h1v1h-1zM203 342h1v1h-1zM205 342h1v1h-1zM207 342h1v1h-1zM209 342h1v1h-1zM211 342h1v1h-1zM213 342h1v1h-1zM215 342h1v1h-1zM217 342h1v1h-1zM219 342h1v1h-1zM221 18h1v1h-1zM221 20h1v1h-1zM221 22h1v1h-1zM221 30h1v1h-1zM221 43h1v1h-1zM221 56h1v1h-1zM221 69h1v1h-1zM221 82h1v1h-1zM221 95h1v1h-1zM221 108h1v1h-1zM221 121h1v1h-1zM221 134h1v1h-1zM221 147h1v1h-1zM221 160h1v1h-1zM221 173h1v1h-1zM221 186h1v1h-1zM221 199h1v1h-1zM221 212h1v1h-1zM221 225h1v1h-1zM221 238h1v1h-1zM221 251h1v1h-1zM221 264h1v1h-1zM221 277h1v1h-1zM221 290h1v1h-1zM221 303h1v1h-1zM221 316h1v1h-1zM221 329h1v1h-1zM221 339h1v1h-1zM221 341h1v1h-1zM221 342h1v1h-1zM221 343h1v1h-1zM221 345h1v1h-1zM221 355h1v1h-1zM221 368h1v1h-1zM221 381h1v1h-1zM221 394h1v1h-1zM221 407h1v1h-1zM221 420h1v1h-1zM221 433h1v1h-1zM221 446h1v1h-1zM221 459h1v1h-1zM221 472h1v1h-1zM221 485h1v1h-1zM221 498h1v1h-1zM221 511h1v1h-1zM221 524h1v1h-1zM221 537h1v1h-1zM221 550h1v1h-1zM221 563h1v1h-1zM221 576h1v1h-1zM221 589h1v1h-1zM221 602h1v1h-1zM221 615h1v1h-1zM221 628h1v1h-1zM221 641h1v1h-1zM221 654h1v1h-1zM221 662h1v1h-1zM221 664h1v1h-1zM221 666h1v1h-1zM221 667h1v1h-1zM223 342h1v1h-1zM225 342h1v1h-1zM227 342h1v1h-1zM229 342h1v1h-1zM231 342h1v1h-1zM233 342h1v1h-1zM235 342h1v1h-1zM237 342h1v1h-1zM239 342h1v1h-1zM241 17h1v1h-1zM241 19h1v1h-1zM241 82h1v1h-1zM241 147h1v1h-1zM241 212h1v1h-1zM241 277h1v1h-1zM241 339h1v1h-1zM241 341h1v1h-1zM241 342h1v1h-1zM241 343h1v1h-1zM241 345h1v1h-1zM241 407h1v1h-1zM241 472h1v1h-1zM241 537h1v1h-1zM241 602h1v1h-1zM241 665h1v1h-1zM241 667h1v1h-1zM243 342h1v1h-1zM245 342h1v1h-1zM247 342h1v1h-1zM249 342h1v1h-1zM251 342h1v1h-1zM253 342h1v1h-1zM255 342h1v1h-1zM257 342h1v1h-1zM259 342h1v1h-1zM261 17h1v1h-1zM261 19h1v1h-1zM261 82h1v1h-1zM261 147h1v1h-1zM261 212h1v1h-1zM261 277h1v1h-1zM261 339h1v1h-1zM261 341h1v1h-1zM261 342h1v1h-1zM261 343h1v1h-1zM261 345h1v1h-1zM261 407h1v1h-1zM261 472h1v1h-1zM261 537h1v1h-1zM261 602h1v1h-1zM261 665h1v1h-1zM261 667h1v1h-1zM263 342h1v1h-1zM265 342h1v1h-1zM267 342h1v1h-1zM269 342h1v1h-1zM271 342h1v1h-1zM273 342h1v1h-1zM275 342h1v1h-1zM277 342h1v1h-1zM279 342h1v1h-1zM281 17h1v1h-1zM281 19h1v1h-1zM281 82h1v1h-1zM281 147h1v1h-1zM281 212h1v1h-1zM281 277h1v1h-1zM281 339h1v1h-1zM281 341h1v1h-1zM281 342h1v1h-1zM281 343h1v1h-1zM281 345h1v1h-1zM281 407h1v1h-1zM281 472h1v1h-1zM281 537h1v1h-1zM281 602h1v1h-1zM281 665h1v1h-1zM281 667h1v1h-1zM283 342h1v1h-1zM285 342h1v1h-1zM287 342h1v1h-1zM289 342h1v1h-1zM291 342h1v1h-1zM293 342h1v1h-1zM295 342h1v1h-1zM297 342h1v1h-1zM299 342h1v1h-1zM301 17h1v1h-1zM301 19h1v1h-1zM301 82h1v1h-1zM301 147h1v1h-1zM301 212h1v1h-1zM301 277h1v1h-1zM301 339h1v1h-1zM301 341h1v1h-1zM301 342h1v1h-1zM301 343h1v1h-1zM301 345h1v1h-1zM301 407h1v1h-1zM301 472h1v1h-1zM301 537h1v1h-1zM301 602h1v1h-1zM301 665h1v1h-1zM301 667h1v1h-1zM303 342h1v1h-1zM305 342h1v1h-1zM307 342h1v1h-1zM309 342h1v1h-1zM311 342h1v1h-1zM313 342h1v1h-1zM315 342h1v1h-1zM317 342h1v1h-1zM319 342h1v1h-1zM321 18h1v1h-1zM321 20h1v1h-1zM321 22h1v1h-1zM321 30h1v1h-1zM321 43h1v1h-1zM321 56h1v1h-1zM321 69h1v1h-1zM321 82h1v1h-1zM321 95h1v1h-1zM321 108h1v1h-1zM321 121h1v1h-1zM321 134h1v1h-1zM321 147h1v1h-1zM321 160h1v1h-1zM321 173h1v1h-1zM321 186h1v1h-1zM321 199h1v1h-1zM321 212h1v1h-1zM321 225h1v1h-1zM321 238h1v1h-1zM321 251h1v1h-1zM321 264h1v1h-1zM321 277h1v1h-1zM321 290h1v1h-1zM321 303h1v1h-1zM321 316h1v1h-1zM321 329h1v1h-1zM321 339h1v1h-1zM321 341h1v1h-1zM321 342h1v1h-1zM321 343h1v1h-1zM321 345h1v1h-1zM321 355h1v1h-1zM321 368h1v1h-1zM321 381h1v1h-1zM321 394h1v1h-1zM321 407h1v1h-1zM321 420h1v1h-1zM321 433h1v1h-1zM321 446h1v1h-1zM321 459h1v1h-1zM321 472h1v1h-1zM321 485h1v1h-1zM321 498h1v1h-1zM321 511h1v1h-1zM321 524h1v1h-1zM321 537h1v1h-1zM321 550h1v1h-1zM321 563h1v1h-1zM321 576h1v1h-1zM321 589h1v1h-1zM321 602h1v1h-1zM321 615h1v1h-1zM321 628h1v1h-1zM321 641h1v1h-1zM321 654h1v1h-1zM321 662h1v1h-1zM321 664h1v1h-1zM321 666h1v1h-1zM321 667h1v1h-1zM323 342h1v1h-1zM325 342h1v1h-1zM327 342h1v1h-1zM329 342h1v1h-1zM331 342h1v1h-1zM333 342h1v1h-1zM335 342h1v1h-1zM337 342h1v1h-1zM339 342h1v1h-1zM341 17h1v1h-1zM341 19h1v1h-1zM341 82h1v1h-1zM341 147h1v1h-1zM341 212h1v1h-1zM341 277h1v1h-1zM341 339h1v1h-1zM341 341h1v1h-1zM341 342h1v1h-1zM341 343h1v1h-1zM341 345h1v1h-1zM341 407h1v1h-1zM341 472h1v1h-1zM341 537h1v1h-1zM341 602h1v1h-1zM341 665h1v1h-1zM341 667h1v1h-1zM343 342h1v1h-1zM345 342h1v1h-1zM347 342h1v1h-1zM349 342h1v1h-1zM351 342h1v1h-1zM353 342h1v1h-1zM355 342h1v1h-1zM357 342h1v1h-1zM359 342h1v1h-1zM361 17h1v1h-1zM361 19h1v1h-1zM361 82h1v1h-1zM361 147h1v1h-1zM361 212h1v1h-1zM361 277h1v1h-1zM361 339h1v1h-1zM361 341h1v1h-1zM361 342h1v1h-1zM361 343h1v1h-1zM361 345h1v1h-1zM361 407h1v1h-1zM361 472h1v1h-1zM361 537h1v1h-1zM361 602h1v1h-1zM361 665h1v1h-1zM361 667h1v1h-1zM363 342h1v1h-1zM365 342h1v1h-1zM367 342h1v1h-1zM369 342h1v1h-1zM371 342h1v1h-1zM373 342h1v1h-1zM375 342h1v1h-1zM377 342h1v1h-1zM379 342h1v1h-1zM381 17h1v1h-1zM381 19h1v1h-1zM381 82h1v1h-1zM381 147h1v1h-1zM381 212h1v1h-1zM381 277h1v1h-1zM381 339h1v1h-1zM381 341h1v1h-1zM381 342h1v1h-1zM381 343h1v1h-1zM381 345h1v1h-1zM381 407h1v1h-1zM381 472h1v1h-1zM381 537h1v1h-1zM381 602h1v1h-1zM381 665h1v1h-1zM381 667h1v1h-1zM383 342h1v1h-1zM385 342h1v1h-1zM387 342h1v1h-1zM389 342h1v1h-1zM391 342h1v1h-1zM393 342h1v1h-1zM395 342h1v1h-1zM397 342h1v1h-1zM399 342h1v1h-1zM401 17h1v1h-1zM401 19h1v1h-1zM401 82h1v1h-1zM401 147h1v1h-1zM401 212h1v1h-1zM401 277h1v1h-1zM401 339h1v1h-1zM401 341h1v1h-1zM401 342h1v1h-1zM401 343h1v1h-1zM401 345h1v1h-1zM401 407h1v1h-1zM401 472h1v1h-1zM401 537h1v1h-1zM401 602h1v1h-1zM401 665h1v1h-1zM401 667h1v1h-1zM403 342h1v1h-1zM405 342h1v1h-1zM407 342h1v1h-1zM409 342h1v1h-1zM411 342h1v1h-1zM413 342h1v1h-1zM415 342h1v1h-1zM417 342h1v1h-1zM419 342h1v1h-1zM421 18h1v1h-1zM421 20h1v1h-1zM421 22h1v1h-1zM421 30h1v1h-1zM421 43h1v1h-1zM421 56h1v1h-1zM421 69h1v1h-1zM421 82h1v1h-1zM421 95h1v1h-1zM421 108h1v1h-1zM421 121h1v1h-1zM421 134h1v1h-1zM421 147h1v1h-1zM421 160h1v1h-1zM421 173h1v1h-1zM421 186h1v1h-1zM421 199h1v1h-1zM421 212h1v1h-1zM421 225h1v1h-1zM421 238h1v1h-1zM421 251h1v1h-1zM421 264h1v1h-1zM421 277h1v1h-1zM421 290h1v1h-1zM421 303h1v1h-1zM421 316h1v1h-1zM421 329h1v1h-1zM421 339h1v1h-1zM421 341h1v1h-1zM421 342h1v1h-1zM421 343h1v1h-1zM421 345h1v1h-1zM421 355h1v1h-1zM421 368h1v1h-1zM421 381h1v1h-1zM421 394h1v1h-1zM421 407h1v1h-1zM421 420h1v1h-1zM421 433h1v1h-1zM421 446h1v1h-1zM421 459h1v1h-1zM421 472h1v1h-1zM421 485h1v1h-1zM421 498h1v1h-1zM421 511h1v1h-1zM421 524h1v1h-1zM421 537h1v1h-1zM421 550h1v1h-1zM421 563h1v1h-1zM421 576h1v1h-1zM421 589h1v1h-1zM421 602h1v1h-1zM421 615h1v1h-1zM421 628h1v1h-1zM421 641h1v1h-1zM421 654h1v1h-1zM421 662h1v1h-1zM421 664h1v1h-1zM421 666h1v1h-1zM421 667h1v1h-1zM423 342h1v1h-1zM425 342h1v1h-1zM427 342h1v1h-1zM429 342h1v1h-1zM431 342h1v1h-1zM433 342h1v1h-1zM435 342h1v1h-1zM437 342h1v1h-1zM439 342h1v1h-1zM441 17h1v1h-1zM441 19h1v1h-1zM441 82h1v1h-1zM441 147h1v1h-1zM441 212h1v1h-1zM441 277h1v1h-1zM441 339h1v1h-1zM441 341h1v1h-1zM441 342h1v1h-1zM441 343h1v1h-1zM441 345h1v1h-1zM441 407h1v1h-1zM441 472h1v1h-1zM441 537h1v1h-1zM441 602h1v1h-1zM441 665h1v1h-1zM441 667h1v1h-1zM443 342h1v1h-1zM445 342h1v1h-1zM447 342h1v1h-1zM449 342h1v1h-1zM451 342h1v1h-1zM453 342h1v1h-1zM455 342h1v1h-1zM457 342h1v1h-1zM459 342h1v1h-1zM461 17h1v1h-1zM461 19h1v1h-1zM461 82h1v1h-1zM461 147h1v1h-1zM461 212h1v1h-1zM461 277h1v1h-1zM461 339h1v1h-1zM461 341h1v1h-1zM461 342h1v1h-1zM461 343h1v1h-1zM461 345h1v1h-1zM461 407h1v1h-1zM461 472h1v1h-1zM461 537h1v1h-1zM461 602h1v1h-1zM461 665h1v1h-1zM461 667h1v1h-1zM463 342h1v1h-1zM465 342h1v1h-1zM467 342h1v1h-1zM469 342h1v1h-1zM471 342h1v1h-1zM473 342h1v1h-1zM475 342h1v1h-1zM477 342h1v1h-1zM479 342h1v1h-1zM481 17h1v1h-1zM481 19h1v1h-1zM481 82h1v1h-1zM481 147h1v1h-1zM481 212h1v1h-1zM481 277h1v1h-1zM481 339h1v1h-1zM481 341h1v1h-1zM481 342h1v1h-1zM481 343h1v1h-1zM481 345h1v1h-1zM481 407h1v1h-1zM481 472h1v1h-1zM481 537h1v1h-1zM481 602h1v1h-1zM481 665h1v1h-1zM481 667h1v1h-1zM483 342h1v1h-1zM485 342h1v1h-1zM487 342h1v1h-1zM489 342h1v1h-1zM491 342h1v1h-1zM493 342h1v1h-1zM495 342h1v1h-1zM497 342h1v1h-1zM499 342h1v1h-1zM501 17h1v1h-1zM501 19h1v1h-1zM501 82h1v1h-1zM501 147h1v1h-1zM501 212h1v1h-1zM501 277h1v1h-1zM501 339h1v1h-1zM501 341h1v1h-1zM501 342h1v1h-1zM501 343h1v1h-1zM501 345h1v1h-1zM501 407h1v1h-1zM501 472h1v1h-1zM501 537h1v1h-1zM501 602h1v1h-1zM501 665h1v1h-1zM501 667h1v1h-1zM503 342h1v1h-1zM505 342h1v1h-1zM507 342h1v1h-1zM509 342h1v1h-1zM511 342h1v1h-1zM513 342h1v1h-1zM515 342h1v1h-1zM517 342h1v1h-1zM518 30h1v1h-1zM518 43h1v1h-1zM518 56h1v1h-1zM518 69h1v1h-1zM518 82h1v1h-1zM518 95h1v1h-1zM518 108h1v1h-1zM518 121h1v1h-1zM518 134h1v1h-1zM518 147h1v1h-1zM518 160h1v1h-1zM518 173h1v1h-1zM518 186h1v1h-1zM518 199h1v1h-1zM518 212h1v1h-1zM518 225h1v1h-1zM518 238h1v1h-1zM518 251h1v1h-1zM518 264h1v1h-1zM518 277h1v1h-1zM518 290h1v1h-1zM518 303h1v1h-1zM518 316h1v1h-1zM518 329h1v1h-1zM518 355h1v1h-1zM518 368h1v1h-1zM518 381h1v1h-1zM518 394h1v1h-1zM518 407h1v1h-1zM518 420h1v1h-1zM518 433h1v1h-1zM518 446h1v1h-1zM518 459h1v1h-1zM518 472h1v1h-1zM518 485h1v1h-1zM518 498h1v1h-1zM518 511h1v1h-1zM518 524h1v1h-1zM518 537h1v1h-1zM518 550h1v1h-1zM518 563h1v1h-1zM518 576h1v1h-1zM518 589h1v1h-1zM518 602h1v1h-1zM518 615h1v1h-1zM518 628h1v1h-1zM518 641h1v1h-1zM518 654h1v1h-1zM519 342h1v1h-1zM520 30h1v1h-1zM520 43h1v1h-1zM520 56h1v1h-1zM520 69h1v1h-1zM520 82h1v1h-1zM520 95h1v1h-1zM520 108h1v1h-1zM520 121h1v1h-1zM520 134h1v1h-1zM520 147h1v1h-1zM520 160h1v1h-1zM520 173h1v1h-1zM520 186h1v1h-1zM520 199h1v1h-1zM520 212h1v1h-1zM520 225h1v1h-1zM520 238h1v1h-1zM520 251h1v1h-1zM520 264h1v1h-1zM520 277h1v1h-1zM520 290h1v1h-1zM520 303h1v1h-1zM520 316h1v1h-1zM520 329h1v1h-1zM520 355h1v1h-1zM520 368h1v1h-1zM520 381h1v1h-1zM520 394h1v1h-1zM520 407h1v1h-1zM520 420h1v1h-1zM520 433h1v1h-1zM520 446h1v1h-1zM520 459h1v1h-1zM520 472h1v1h-1zM520 485h1v1h-1zM520 498h1v1h-1zM520 511h1v1h-1zM520 524h1v1h-1zM520 537h1v1h-1zM520 550h1v1h-1zM520 563h1v1h-1zM520 576h1v1h-1zM520 589h1v1h-1zM520 602h1v1h-1zM520 615h1v1h-1zM520 628h1v1h-1zM520 641h1v1h-1zM520 654h1v1h-1zM521 18h1v1h-1zM521 20h1v1h-1zM521 22h1v1h-1zM521 24h1v1h-1zM521 26h1v1h-1zM521 28h1v1h-1zM521 30h1v1h-1zM521 32h1v1h-1zM521 34h1v1h-1zM521 36h1v1h-1zM521 38h1v1h-1zM521 40h1v1h-1zM521 42h1v1h-1zM521 43h1v1h-1zM521 44h1v1h-1zM521 46h1v1h-1zM521 48h1v1h-1zM521 50h1v1h-1zM521 52h1v1h-1zM521 54h1v1h-1zM521 56h1v1h-1zM521 58h1v1h-1zM521 60h1v1h-1zM521 62h1v1h-1zM521 64h1v1h-1zM521 66h1v1h-1zM521 68h1v1h-1zM521 69h1v1h-1zM521 70h1v1h-1zM521 72h1v1h-1zM521 74h1v1h-1zM521 76h1v1h-1zM521 78h1v1h-1zM521 80h1v1h-1zM521 82h1v1h-1zM521 84h1v1h-1zM521 86h1v1h-1zM521 88h1v1h-1zM521 90h1v1h-1zM521 92h1v1h-1zM521 94h1v1h-1zM521 95h1v1h-1zM521 96h1v1h-1zM521 98h1v1h-1zM521 100h1v1h-1zM521 102h1v1h-1zM521 104h1v1h-1zM521 106h1v1h-1zM521 108h1v1h-1zM521 110h1v1h-1zM521 112h1v1h-1zM521 114h1v1h-1zM521 116h1v1h-1zM521 118h1v1h-1zM521 120h1v1h-1zM521 121h1v1h-1zM521 122h1v1h-1zM521 124h1v1h-1zM521 126h1v1h-1zM521 128h1v1h-1zM521 130h1v1h-1zM521 132h1v1h-1zM521 134h1v1h-1zM521 136h1v1h-1zM521 138h1v1h-1zM521 140h1v1h-1zM521 142h1v1h-1zM521 144h1v1h-1zM521 146h1v1h-1zM521 147h1v1h-1zM521 148h1v1h-1zM521 150h1v1h-1zM521 152h1v1h-1zM521 154h1v1h-1zM521 156h1v1h-1zM521 158h1v1h-1zM521 160h1v1h-1zM521 162h1v1h-1zM521 164h1v1h-1zM521 166h1v1h-1zM521 168h1v1h-1zM521 170h1v1h-1zM521 172h1v1h-1zM521 173h1v1h-1zM521 174h1v1h-1zM521 176h1v1h-1zM521 178h1v1h-1zM521 180h1v1h-1zM521 182h1v1h-1zM521 184h1v1h-1zM521 186h1v1h-1zM521 188h1v1h-1zM521 190h1v1h-1zM521 192h1v1h-1zM521 194h1v1h-1zM521 196h1v1h-1zM521 198h1v1h-1zM521 199h1v1h-1zM521 200h1v1h-1zM521 202h1v1h-1zM521 204h1v1h-1zM521 206h1v1h-1zM521 208h1v1h-1zM521 210h1v1h-1zM521 212h1v1h-1zM521 214h1v1h-1zM521 216h1v1h-1zM521 218h1v1h-1zM521 220h1v1h-1zM521 222h1v1h-1zM521 224h1v1h-1zM521 225h1v1h-1zM521 226h1v1h-1zM521 228h1v1h-1zM521 230h1v1h-1zM521 232h1v1h-1zM521 234h1v1h-1zM521 236h1v1h-1zM521 238h1v1h-1zM521 240h1v1h-1zM521 242h1v1h-1zM521 244h1v1h-1zM521 246h1v1h-1zM521 248h1v1h-1zM521 250h1v1h-1zM521 251h1v1h-1zM521 252h1v1h-1zM521 254h1v1h-1zM521 256h1v1h-1zM521 258h1v1h-1zM521 260h1v1h-1zM521 262h1v1h-1zM521 264h1v1h-1zM521 266h1v1h-1zM521 268h1v1h-1zM521 270h1v1h-1zM521 272h1v1h-1zM521 274h1v1h-1zM521 276h1v1h-1zM521 277h1v1h-1zM521 278h1v1h-1zM521 280h1v1h-1zM521 282h1v1h-1zM521 284h1v1h-1zM521 286h1v1h-1zM521 288h1v1h-1zM521 290h1v1h-1zM521 292h1v1h-1zM521 294h1v1h-1zM521 296h1v1h-1zM521 298h1v1h-1zM521 300h1v1h-1zM521 302h1v1h-1zM521 303h1v1h-1zM521 304h1v1h-1zM521 306h1v1h-1zM521 308h1v1h-1zM521 310h1v1h-1zM521 312h1v1h-1zM521 314h1v1h-1zM521 316h1v1h-1zM521 318h1v1h-1zM521 320h1v1h-1zM521 322h1v1h-1zM521 324h1v1h-1zM521 326h1v1h-1zM521 328h1v1h-1zM521 329h1v1h-1zM521 330h1v1h-1zM521 332h1v1h-1zM521 334h1v1h-1zM521 336h1v1h-1zM521 338h1v1h-1zM521 340h1v1h-1zM521 342h1v1h-1zM521 344h1v1h-1zM521 346h1v1h-1zM521 348h1v1h-1zM521 350h1v1h-1zM521 352h1v1h-1zM521 354h1v1h-1zM521 355h1v1h-1zM521 356h1v1h-1zM521 358h1v1h-1zM521 360h1v1h-1zM521 362h1v1h-1zM521 364h1v1h-1zM521 366h1v1h-1zM521 368h1v1h-1zM521 370h1v1h-1zM521 372h1v1h-1zM521 374h1v1h-1zM521 376h1v1h-1zM521 378h1v1h-1zM521 380h1v1h-1zM521 381h1v1h-1zM521 382h1v1h-1zM521 384h1v1h-1zM521 386h1v1h-1zM521 388h1v1h-1zM521 390h1v1h-1zM521 392h1v1h-1zM521 394h1v1h-1zM521 396h1v1h-1zM521 398h1v1h-1zM521 400h1v1h-1zM521 402h1v1h-1zM521 404h1v1h-1zM521 406h1v1h-1zM521 407h1v1h-1zM521 408h1v1h-1zM521 410h1v1h-1zM521 412h1v1h-1zM521 414h1v1h-1zM521 416h1v1h-1zM521 418h1v1h-1zM521 420h1v1h-1zM521 422h1v1h-1zM521 424h1v1h-1zM521 426h1v1h-1zM521 428h1v1h-1zM521 430h1v1h-1zM521 432h1v1h-1zM521 433h1v1h-1zM521 434h1v1h-1zM521 436h1v1h-1zM521 438h1v1h-1zM521 440h1v1h-1zM521 442h1v1h-1zM521 444h1v1h-1zM521 446h1v1h-1zM521 448h1v1h-1zM521 450h1v1h-1zM521 452h1v1h-1zM521 454h1v1h-1zM521 456h1v1h-1zM521 458h1v1h-1zM521 459h1v1h-1zM521 460h1v1h-1zM521 462h1v1h-1zM521 464h1v1h-1zM521 466h1v1h-1zM521 468h1v1h-1zM521 470h1v1h-1zM521 472h1v1h-1zM521 474h1v1h-1zM521 476h1v1h-1zM521 478h1v1h-1zM521 480h1v1h-1zM521 482h1v1h-1zM521 484h1v1h-1zM521 485h1v1h-1zM521 486h1v1h-1zM521 488h1v1h-1zM521 490h1v1h-1zM521 492h1v1h-1zM521 494h1v1h-1zM521 496h1v1h-1zM521 498h1v1h-1zM521 500h1v1h-1zM521 502h1v1h-1zM521 504h1v1h-1zM521 506h1v1h-1zM521 508h1v1h-1zM521 510h1v1h-1zM521 511h1v1h-1zM521 512h1v1h-1zM521 514h1v1h-1zM521 516h1v1h-1zM521 518h1v1h-1zM521 520h1v1h-1zM521 522h1v1h-1zM521 524h1v1h-1zM521 526h1v1h-1zM521 528h1v1h-1zM521 530h1v1h-1zM521 532h1v1h-1zM521 534h1v1h-1zM521 536h1v1h-1zM521 537h1v1h-1zM521 538h1v1h-1zM521 540h1v1h-1zM521 542h1v1h-1zM521 544h1v1h-1zM521 546h1v1h-1zM521 548h1v1h-1zM521 550h1v1h-1zM521 552h1v1h-1zM521 554h1v1h-1zM521 556h1v1h-1zM521 558h1v1h-1zM521 560h1v1h-1zM521 562h1v1h-1zM521 563h1v1h-1zM521 564h1v1h-1zM521 566h1v1h-1zM521 568h1v1h-1zM521 570h1v1h-1zM521 572h1v1h-1zM521 574h1v1h-1zM521 576h1v1h-1zM521 578h1v1h-1zM521 580h1v1h-1zM521 582h1v1h-1zM521 584h1v1h-1zM521 586h1v1h-1zM521 588h1v1h-1zM521 589h1v1h-1zM521 590h1v1h-1zM521 592h1v1h-1zM521 594h1v1h-1zM521 596h1v1h-1zM521 598h1v1h-1zM521 600h1v1h-1zM521 602h1v1h-1zM521 604h1v1h-1zM521 606h1v1h-1zM521 608h1v1h-1zM521 610h1v1h-1zM521 612h1v1h-1zM521 614h1v1h-1zM521 615h1v1h-1zM521 616h1v1h-1zM521 618h1v1h-1zM521 620h1v1h-1zM521 622h1v1h-1zM521 624h1v1h-1zM521 626h1v1h-1zM521 628h1v1h-1zM521 630h1v1h-1zM521 632h1v1h-1zM521 634h1v1h-1zM521 636h1v1h-1zM521 638h1v1h-1zM521 640h1v1h-1zM521 641h1v1h-1zM521 642h1v1h-1zM521 644h1v1h-1zM521 646h1v1h-1zM521 648h1v1h-1zM521 650h1v1h-1zM521 652h1v1h-1zM521 654h1v1h-1zM521 656h1v1h-1zM521 658h1v1h-1zM521 660h1v1h-1zM521 662h1v1h-1zM521 664h1v1h-1zM521 666h1v1h-1zM522 30h1v1h-1zM522 43h1v1h-1zM522 56h1v1h-1zM522 69h1v1h-1zM522 82h1v1h-1zM522 95h1v1h-1zM522 108h1v1h-1zM522 121h1v1h-1zM522 134h1v1h-1zM522 147h1v1h-1zM522 160h1v1h-1zM522 173h1v1h-1zM522 186h1v1h-1zM522 199h1v1h-1zM522 212h1v1h-1zM522 225h1v1h-1zM522 238h1v1h-1zM522 251h1v1h-1zM522 264h1v1h-1zM522 277h1v1h-1zM522 290h1v1h-1zM522 303h1v1h-1zM522 316h1v1h-1zM522 329h1v1h-1zM522 355h1v1h-1zM522 368h1v1h-1zM522 381h1v1h-1zM522 394h1v1h-1zM522 407h1v1h-1zM522 420h1v1h-1zM522 433h1v1h-1zM522 446h1v1h-1zM522 459h1v1h-1zM522 472h1v1h-1zM522 485h1v1h-1zM522 498h1v1h-1zM522 511h1v1h-1zM522 524h1v1h-1zM522 537h1v1h-1zM522 550h1v1h-1zM522 563h1v1h-1zM522 576h1v1h-1zM522 589h1v1h-1zM522 602h1v1h-1zM522 615h1v1h-1zM522 628h1v1h-1zM522 641h1v1h-1zM522 654h1v1h-1zM523 342h1v1h-1zM524 30h1v1h-1zM524 43h1v1h-1zM524 56h1v1h-1zM524 69h1v1h-1zM524 82h1v1h-1zM524 95h1v1h-1zM524 108h1v1h-1zM524 121h1v1h-1zM524 134h1v1h-1zM524 147h1v1h-1zM524 160h1v1h-1zM524 173h1v1h-1zM524 186h1v1h-1zM524 199h1v1h-1zM524 212h1v1h-1zM524 225h1v1h-1zM524 238h1v1h-1zM524 251h1v1h-1zM524 264h1v1h-1zM524 277h1v1h-1zM524 290h1v1h-1zM524 303h1v1h-1zM524 316h1v1h-1zM524 329h1v1h-1zM524 355h1v1h-1zM524 368h1v1h-1zM524 381h1v1h-1zM524 394h1v1h-1zM524 407h1v1h-1zM524 420h1v1h-1zM524 433h1v1h-1zM524 446h1v1h-1zM524 459h1v1h-1zM524 472h1v1h-1zM524 485h1v1h-1zM524 498h1v1h-1zM524 511h1v1h-1zM524 524h1v1h-1zM524 537h1v1h-1zM524 550h1v1h-1zM524 563h1v1h-1zM524 576h1v1h-1zM524 589h1v1h-1zM524 602h1v1h-1zM524 615h1v1h-1zM524 628h1v1h-1zM524 641h1v1h-1zM524 654h1v1h-1zM525 342h1v1h-1zM527 342h1v1h-1zM529 342h1v1h-1zM531 342h1v1h-1zM533 342h1v1h-1zM535 342h1v1h-1zM537 342h1v1h-1zM539 342h1v1h-1zM541 17h1v1h-1zM541 19h1v1h-1zM541 82h1v1h-1zM541 147h1v1h-1zM541 212h1v1h-1zM541 277h1v1h-1zM541 339h1v1h-1zM541 341h1v1h-1zM541 342h1v1h-1zM541 343h1v1h-1zM541 345h1v1h-1zM541 407h1v1h-1zM541 472h1v1h-1zM541 537h1v1h-1zM541 602h1v1h-1zM541 665h1v1h-1zM541 667h1v1h-1zM543 342h1v1h-1zM545 342h1v1h-1zM547 342h1v1h-1zM549 342h1v1h-1zM551 342h1v1h-1zM553 342h1v1h-1zM555 342h1v1h-1zM557 342h1v1h-1zM559 342h1v1h-1zM561 17h1v1h-1zM561 19h1v1h-1zM561 82h1v1h-1zM561 147h1v1h-1zM561 212h1v1h-1zM561 277h1v1h-1zM561 339h1v1h-1zM561 341h1v1h-1zM561 342h1v1h-1zM561 343h1v1h-1zM561 345h1v1h-1zM561 407h1v1h-1zM561 472h1v1h-1zM561 537h1v1h-1zM561 602h1v1h-1zM561 665h1v1h-1zM561 667h1v1h-1zM563 342h1v1h-1zM565 342h1v1h-1zM567 342h1v1h-1zM569 342h1v1h-1zM571 342h1v1h-1zM573 342h1v1h-1zM575 342h1v1h-1zM577 342h1v1h-1zM579 342h1v1h-1zM581 17h1v1h-1zM581 19h1v1h-1zM581 82h1v1h-1zM581 147h1v1h-1zM581 212h1v1h-1zM581 277h1v1h-1zM581 339h1v1h-1zM581 341h1v1h-1zM581 342h1v1h-1zM581 343h1v1h-1zM581 345h1v1h-1zM581 407h1v1h-1zM581 472h1v1h-1zM581 537h1v1h-1zM581 602h1v1h-1zM581 665h1v1h-1zM581 667h1v1h-1zM583 342h1v1h-1zM585 342h1v1h-1zM587 342h1v1h-1zM589 342h1v1h-1zM591 342h1v1h-1zM593 342h1v1h-1zM595 342h1v1h-1zM597 342h1v1h-1zM599 342h1v1h-1zM601 17h1v1h-1zM601 19h1v1h-1zM601 82h1v1h-1zM601 147h1v1h-1zM601 212h1v1h-1zM601 277h1v1h-1zM601 339h1v1h-1zM601 341h1v1h-1zM601 342h1v1h-1zM601 343h1v1h-1zM601 345h1v1h-1zM601 407h1v1h-1zM601 472h1v1h-1zM601 537h1v1h-1zM601 602h1v1h-1zM601 665h1v1h-1zM601 667h1v1h-1zM603 342h1v1h-1zM605 342h1v1h-1zM607 342h1v1h-1zM609 342h1v1h-1zM611 342h1v1h-1zM613 342h1v1h-1zM615 342h1v1h-1zM617 342h1v1h-1zM619 342h1v1h-1zM621 18h1v1h-1zM621 20h1v1h-1zM621 22h1v1h-1zM621 30h1v1h-1zM621 43h1v1h-1zM621 56h1v1h-1zM621 69h1v1h-1zM621 82h1v1h-1zM621 95h1v1h-1zM621 108h1v1h-1zM621 121h1v1h-1zM621 134h1v1h-1zM621 147h1v1h-1zM621 160h1v1h-1zM621 173h1v1h-1zM621 186h1v1h-1zM621 199h1v1h-1zM621 212h1v1h-1zM621 225h1v1h-1zM621 238h1v1h-1zM621 251h1v1h-1zM621 264h1v1h-1zM621 277h1v1h-1zM621 290h1v1h-1zM621 303h1v1h-1zM621 316h1v1h-1zM621 329h1v1h-1zM621 339h1v1h-1zM621 341h1v1h-1zM621 342h1v1h-1zM621 343h1v1h-1zM621 345h1v1h-1zM621 355h1v1h-1zM621 368h1v1h-1zM621 381h1v1h-1zM621 394h1v1h-1zM621 407h1v1h-1zM621 420h1v1h-1zM621 433h1v1h-1zM621 446h1v1h-1zM621 459h1v1h-1zM621 472h1v1h-1zM621 485h1v1h-1zM621 498h1v1h-1zM621 511h1v1h-1zM621 524h1v1h-1zM621 537h1v1h-1zM621 550h1v1h-1zM621 563h1v1h-1zM621 576h1v1h-1zM621 589h1v1h-1zM621 602h1v1h-1zM621 615h1v1h-1zM621 628h1v1h-1zM621 641h1v1h-1zM621 654h1v1h-1zM621 662h1v1h-1zM621 664h1v1h-1zM621 666h1v1h-1zM621 667h1v1h-1zM623 342h1v1h-1zM625 342h1v1h-1zM627 342h1v1h-1zM629 342h1v1h-1zM631 342h1v1h-1zM633 342h1v1h-1zM635 342h1v1h-1zM637 342h1v1h-1zM639 342h1v1h-1zM641 17h1v1h-1zM641 19h1v1h-1zM641 82h1v1h-1zM641 147h1v1h-1zM641 212h1v1h-1zM641 277h1v1h-1zM641 339h1v1h-1zM641 341h1v1h-1zM641 342h1v1h-1zM641 343h1v1h-1zM641 345h1v1h-1zM641 407h1v1h-1zM641 472h1v1h-1zM641 537h1v1h-1zM641 602h1v1h-1zM641 665h1v1h-1zM641 667h1v1h-1zM643 342h1v1h-1zM645 342h1v1h-1zM647 342h1v1h-1zM649 342h1v1h-1zM651 342h1v1h-1zM653 342h1v1h-1zM655 342h1v1h-1zM657 342h1v1h-1zM659 342h1v1h-1zM661 17h1v1h-1zM661 19h1v1h-1zM661 82h1v1h-1zM661 147h1v1h-1zM661 212h1v1h-1zM661 277h1v1h-1zM661 339h1v1h-1zM661 341h1v1h-1zM661 342h1v1h-1zM661 343h1v1h-1zM661 345h1v1h-1zM661 407h1v1h-1zM661 472h1v1h-1zM661 537h1v1h-1zM661 602h1v1h-1zM661 665h1v1h-1zM661 667h1v1h-1zM663 342h1v1h-1zM665 342h1v1h-1zM667 342h1v1h-1zM669 342h1v1h-1zM671 342h1v1h-1zM673 342h1v1h-1zM675 342h1v1h-1zM677 342h1v1h-1zM679 342h1v1h-1zM681 17h1v1h-1zM681 19h1v1h-1zM681 82h1v1h-1zM681 147h1v1h-1zM681 212h1v1h-1zM681 277h1v1h-1zM681 339h1v1h-1zM681 341h1v1h-1zM681 342h1v1h-1zM681 343h1v1h-1zM681 345h1v1h-1zM681 407h1v1h-1zM681 472h1v1h-1zM681 537h1v1h-1zM681 602h1v1h-1zM681 665h1v1h-1zM681 667h1v1h-1zM683 342h1v1h-1zM685 342h1v1h-1zM687 342h1v1h-1zM689 342h1v1h-1zM691 342h1v1h-1zM693 342h1v1h-1zM695 342h1v1h-1zM697 342h1v1h-1zM699 342h1v1h-1zM701 17h1v1h-1zM701 19h1v1h-1zM701 82h1v1h-1zM701 147h1v1h-1zM701 212h1v1h-1zM701 277h1v1h-1zM701 339h1v1h-1zM701 341h1v1h-1zM701 342h1v1h-1zM701 343h1v1h-1zM701 345h1v1h-1zM701 407h1v1h-1zM701 472h1v1h-1zM701 537h1v1h-1zM701 602h1v1h-1zM701 665h1v1h-1zM701 667h1v1h-1zM703 342h1v1h-1zM705 342h1v1h-1zM707 342h1v1h-1zM709 342h1v1h-1zM711 342h1v1h-1zM713 342h1v1h-1zM715 342h1v1h-1zM717 342h1v1h-1zM719 342h1v1h-1zM721 18h1v1h-1zM721 20h1v1h-1zM721 22h1v1h-1zM721 30h1v1h-1zM721 43h1v1h-1zM721 56h1v1h-1zM721 69h1v1h-1zM721 82h1v1h-1zM721 95h1v1h-1zM721 108h1v1h-1zM721 121h1v1h-1zM721 134h1v1h-1zM721 147h1v1h-1zM721 160h1v1h-1zM721 173h1v1h-1zM721 186h1v1h-1zM721 199h1v1h-1zM721 212h1v1h-1zM721 225h1v1h-1zM721 238h1v1h-1zM721 251h1v1h-1zM721 264h1v1h-1zM721 277h1v1h-1zM721 290h1v1h-1zM721 303h1v1h-1zM721 316h1v1h-1zM721 329h1v1h-1zM721 339h1v1h-1zM721 341h1v1h-1zM721 342h1v1h-1zM721 343h1v1h-1zM721 345h1v1h-1zM721 355h1v1h-1zM721 368h1v1h-1zM721 381h1v1h-1zM721 394h1v1h-1zM721 407h1v1h-1zM721 420h1v1h-1zM721 433h1v1h-1zM721 446h1v1h-1zM721 459h1v1h-1zM721 472h1v1h-1zM721 485h1v1h-1zM721 498h1v1h-1zM721 511h1v1h-1zM721 524h1v1h-1zM721 537h1v1h-1zM721 550h1v1h-1zM721 563h1v1h-1zM721 576h1v1h-1zM721 589h1v1h-1zM721 602h1v1h-1zM721 615h1v1h-1zM721 628h1v1h-1zM721 641h1v1h-1zM721 654h1v1h-1zM721 662h1v1h-1zM721 664h1v1h-1zM721 666h1v1h-1zM721 667h1v1h-1zM723 342h1v1h-1zM725 342h1v1h-1zM727 342h1v1h-1zM729 342h1v1h-1zM731 342h1v1h-1zM733 342h1v1h-1zM735 342h1v1h-1zM737 342h1v1h-1zM739 342h1v1h-1zM741 17h1v1h-1zM741 19h1v1h-1zM741 82h1v1h-1zM741 147h1v1h-1zM741 212h1v1h-1zM741 277h1v1h-1zM741 339h1v1h-1zM741 341h1v1h-1zM741 342h1v1h-1zM741 343h1v1h-1zM741 345h1v1h-1zM741 407h1v1h-1zM741 472h1v1h-1zM741 537h1v1h-1zM741 602h1v1h-1zM741 665h1v1h-1zM741 667h1v1h-1zM743 342h1v1h-1zM745 342h1v1h-1zM747 342h1v1h-1zM749 342h1v1h-1zM751 342h1v1h-1zM753 342h1v1h-1zM755 342h1v1h-1zM757 342h1v1h-1zM759 342h1v1h-1zM761 17h1v1h-1zM761 19h1v1h-1zM761 82h1v1h-1zM761 147h1v1h-1zM761 212h1v1h-1zM761 277h1v1h-1zM761 339h1v1h-1zM761 341h1v1h-1zM761 342h1v1h-1zM761 343h1v1h-1zM761 345h1v1h-1zM761 407h1v1h-1zM761 472h1v1h-1zM761 537h1v1h-1zM761 602h1v1h-1zM761 665h1v1h-1zM761 667h1v1h-1zM763 342h1v1h-1zM765 342h1v1h-1zM767 342h1v1h-1zM769 342h1v1h-1zM771 342h1v1h-1zM773 342h1v1h-1zM775 342h1v1h-1zM777 342h1v1h-1zM779 342h1v1h-1zM781 17h1v1h-1zM781 19h1v1h-1zM781 82h1v1h-1zM781 147h1v1h-1zM781 212h1v1h-1zM781 277h1v1h-1zM781 339h1v1h-1zM781 341h1v1h-1zM781 342h1v1h-1zM781 343h1v1h-1zM781 345h1v1h-1zM781 407h1v1h-1zM781 472h1v1h-1zM781 537h1v1h-1zM781 602h1v1h-1zM781 665h1v1h-1zM781 667h1v1h-1zM783 342h1v1h-1zM785 342h1v1h-1zM787 342h1v1h-1zM789 342h1v1h-1zM791 342h1v1h-1zM793 342h1v1h-1zM795 342h1v1h-1zM797 342h1v1h-1zM799 342h1v1h-1zM801 17h1v1h-1zM801 19h1v1h-1zM801 82h1v1h-1zM801 147h1v1h-1zM801 212h1v1h-1zM801 277h1v1h-1zM801 339h1v1h-1zM801 341h1v1h-1zM801 342h1v1h-1zM801 343h1v1h-1zM801 345h1v1h-1zM801 407h1v1h-1zM801 472h1v1h-1zM801 537h1v1h-1zM801 602h1v1h-1zM801 665h1v1h-1zM801 667h1v1h-1zM803 342h1v1h-1zM805 342h1v1h-1zM807 342h1v1h-1zM809 342h1v1h-1zM811 342h1v1h-1zM813 342h1v1h-1zM815 342h1v1h-1zM817 342h1v1h-1zM819 342h1v1h-1zM821 18h1v1h-1zM821 20h1v1h-1zM821 22h1v1h-1zM821 30h1v1h-1zM821 43h1v1h-1zM821 56h1v1h-1zM821 69h1v1h-1zM821 82h1v1h-1zM821 95h1v1h-1zM821 108h1v1h-1zM821 121h1v1h-1zM821 134h1v1h-1zM821 147h1v1h-1zM821 160h1v1h-1zM821 173h1v1h-1zM821 186h1v1h-1zM821 199h1v1h-1zM821 212h1v1h-1zM821 225h1v1h-1zM821 238h1v1h-1zM821 251h1v1h-1zM821 264h1v1h-1zM821 277h1v1h-1zM821 290h1v1h-1zM821 303h1v1h-1zM821 316h1v1h-1zM821 329h1v1h-1zM821 339h1v1h-1zM821 341h1v1h-1zM821 342h1v1h-1zM821 343h1v1h-1zM821 345h1v1h-1zM821 355h1v1h-1zM821 368h1v1h-1zM821 381h1v1h-1zM821 394h1v1h-1zM821 407h1v1h-1zM821 420h1v1h-1zM821 433h1v1h-1zM821 446h1v1h-1zM821 459h1v1h-1zM821 472h1v1h-1zM821 485h1v1h-1zM821 498h1v1h-1zM821 511h1v1h-1zM821 524h1v1h-1zM821 537h1v1h-1zM821 550h1v1h-1zM821 563h1v1h-1zM821 576h1v1h-1zM821 589h1v1h-1zM821 602h1v1h-1zM821 615h1v1h-1zM821 628h1v1h-1zM821 641h1v1h-1zM821 654h1v1h-1zM821 662h1v1h-1zM821 664h1v1h-1zM821 666h1v1h-1zM821 667h1v1h-1zM823 342h1v1h-1zM825 342h1v1h-1zM827 342h1v1h-1zM829 342h1v1h-1zM831 342h1v1h-1zM833 342h1v1h-1zM835 342h1v1h-1zM837 342h1v1h-1zM839 342h1v1h-1zM841 17h1v1h-1zM841 19h1v1h-1zM841 82h1v1h-1zM841 147h1v1h-1zM841 212h1v1h-1zM841 277h1v1h-1zM841 339h1v1h-1zM841 341h1v1h-1zM841 342h1v1h-1zM841 343h1v1h-1zM841 345h1v1h-1zM841 407h1v1h-1zM841 472h1v1h-1zM841 537h1v1h-1zM841 602h1v1h-1zM841 665h1v1h-1zM841 667h1v1h-1zM843 342h1v1h-1zM845 342h1v1h-1zM847 342h1v1h-1zM849 342h1v1h-1zM851 342h1v1h-1zM853 342h1v1h-1zM855 342h1v1h-1zM857 342h1v1h-1zM859 342h1v1h-1zM861 17h1v1h-1zM861 19h1v1h-1zM861 82h1v1h-1zM861 147h1v1h-1zM861 212h1v1h-1zM861 277h1v1h-1zM861 339h1v1h-1zM861 341h1v1h-1zM861 342h1v1h-1zM861 343h1v1h-1zM861 345h1v1h-1zM861 407h1v1h-1zM861 472h1v1h-1zM861 537h1v1h-1zM861 602h1v1h-1zM861 665h1v1h-1zM861 667h1v1h-1zM863 342h1v1h-1zM865 342h1v1h-1zM867 342h1v1h-1zM869 342h1v1h-1zM871 342h1v1h-1zM873 342h1v1h-1zM875 342h1v1h-1zM877 342h1v1h-1zM879 342h1v1h-1zM881 17h1v1h-1zM881 19h1v1h-1zM881 82h1v1h-1zM881 147h1v1h-1zM881 212h1v1h-1zM881 277h1v1h-1zM881 339h1v1h-1zM881 341h1v1h-1zM881 342h1v1h-1zM881 343h1v1h-1zM881 345h1v1h-1zM881 407h1v1h-1zM881 472h1v1h-1zM881 537h1v1h-1zM881 602h1v1h-1zM881 665h1v1h-1zM881 667h1v1h-1zM883 342h1v1h-1zM885 342h1v1h-1zM887 342h1v1h-1zM889 342h1v1h-1zM891 342h1v1h-1zM893 342h1v1h-1zM895 342h1v1h-1zM897 342h1v1h-1zM899 342h1v1h-1zM901 17h1v1h-1zM901 19h1v1h-1zM901 82h1v1h-1zM901 147h1v1h-1zM901 212h1v1h-1zM901 277h1v1h-1zM901 339h1v1h-1zM901 341h1v1h-1zM901 342h1v1h-1zM901 343h1v1h-1zM901 345h1v1h-1zM901 407h1v1h-1zM901 472h1v1h-1zM901 537h1v1h-1zM901 602h1v1h-1zM901 665h1v1h-1zM901 667h1v1h-1zM903 342h1v1h-1zM905 342h1v1h-1zM907 342h1v1h-1zM909 342h1v1h-1zM911 342h1v1h-1zM913 342h1v1h-1zM915 342h1v1h-1zM917 342h1v1h-1zM919 342h1v1h-1zM921 18h1v1h-1zM921 20h1v1h-1zM921 22h1v1h-1zM921 30h1v1h-1zM921 43h1v1h-1zM921 56h1v1h-1zM921 69h1v1h-1zM921 82h1v1h-1zM921 95h1v1h-1zM921 108h1v1h-1zM921 121h1v1h-1zM921 134h1v1h-1zM921 147h1v1h-1zM921 160h1v1h-1zM921 173h1v1h-1zM921 186h1v1h-1zM921 199h1v1h-1zM921 212h1v1h-1zM921 225h1v1h-1zM921 238h1v1h-1zM921 251h1v1h-1zM921 264h1v1h-1zM921 277h1v1h-1zM921 290h1v1h-1zM921 303h1v1h-1zM921 316h1v1h-1zM921 329h1v1h-1zM921 339h1v1h-1zM921 341h1v1h-1zM921 342h1v1h-1zM921 343h1v1h-1zM921 345h1v1h-1zM921 355h1v1h-1zM921 368h1v1h-1zM921 381h1v1h-1zM921 394h1v1h-1zM921 407h1v1h-1zM921 420h1v1h-1zM921 433h1v1h-1zM921 446h1v1h-1zM921 459h1v1h-1zM921 472h1v1h-1zM921 485h1v1h-1zM921 498h1v1h-1zM921 511h1v1h-1zM921 524h1v1h-1zM921 537h1v1h-1zM921 550h1v1h-1zM921 563h1v1h-1zM921 576h1v1h-1zM921 589h1v1h-1zM921 602h1v1h-1zM921 615h1v1h-1zM921 628h1v1h-1zM921 641h1v1h-1zM921 654h1v1h-1zM921 662h1v1h-1zM921 664h1v1h-1zM921 666h1v1h-1zM921 667h1v1h-1zM923 342h1v1h-1zM925 342h1v1h-1zM927 342h1v1h-1zM929 342h1v1h-1zM931 342h1v1h-1zM933 342h1v1h-1zM935 342h1v1h-1zM937 342h1v1h-1zM939 342h1v1h-1zM941 17h1v1h-1zM941 19h1v1h-1zM941 82h1v1h-1zM941 147h1v1h-1zM941 212h1v1h-1zM941 277h1v1h-1zM941 339h1v1h-1zM941 341h1v1h-1zM941 342h1v1h-1zM941 343h1v1h-1zM941 345h1v1h-1zM941 407h1v1h-1zM941 472h1v1h-1zM941 537h1v1h-1zM941 602h1v1h-1zM941 665h1v1h-1zM941 667h1v1h-1zM943 342h1v1h-1zM945 342h1v1h-1zM947 342h1v1h-1zM949 342h1v1h-1zM951 342h1v1h-1zM953 342h1v1h-1zM955 342h1v1h-1zM957 342h1v1h-1zM959 342h1v1h-1zM961 17h1v1h-1zM961 19h1v1h-1zM961 82h1v1h-1zM961 147h1v1h-1zM961 212h1v1h-1zM961 277h1v1h-1zM961 339h1v1h-1zM961 341h1v1h-1zM961 342h1v1h-1zM961 343h1v1h-1zM961 345h1v1h-1zM961 407h1v1h-1zM961 472h1v1h-1zM961 537h1v1h-1zM961 602h1v1h-1zM961 665h1v1h-1zM961 667h1v1h-1zM963 342h1v1h-1zM965 342h1v1h-1zM967 342h1v1h-1zM969 342h1v1h-1zM971 342h1v1h-1zM973 342h1v1h-1zM975 342h1v1h-1zM977 342h1v1h-1zM979 342h1v1h-1zM981 17h1v1h-1zM981 19h1v1h-1zM981 82h1v1h-1zM981 147h1v1h-1zM981 212h1v1h-1zM981 277h1v1h-1zM981 339h1v1h-1zM981 341h1v1h-1zM981 342h1v1h-1zM981 343h1v1h-1zM981 345h1v1h-1zM981 407h1v1h-1zM981 472h1v1h-1zM981 537h1v1h-1zM981 602h1v1h-1zM981 665h1v1h-1zM981 667h1v1h-1zM983 342h1v1h-1zM985 342h1v1h-1zM987 342h1v1h-1zM989 342h1v1h-1zM991 342h1v1h-1zM993 342h1v1h-1zM995 342h1v1h-1zM997 342h1v1h-1zM999 342h1v1h-1zM1001 17h1v1h-1zM1001 19h1v1h-1zM1001 82h1v1h-1zM1001 147h1v1h-1zM1001 212h1v1h-1zM1001 277h1v1h-1zM1001 339h1v1h-1zM1001 341h1v1h-1zM1001 342h1v1h-1zM1001 343h1v1h-1zM1001 345h1v1h-1zM1001 407h1v1h-1zM1001 472h1v1h-1zM1001 537h1v1h-1zM1001 602h1v1h-1zM1001 665h1v1h-1zM1001 667h1v1h-1zM1003 342h1v1h-1zM1005 342h1v1h-1zM1007 342h1v1h-1zM1009 342h1v1h-1zM1011 342h1v1h-1zM1013 342h1v1h-1zM1015 82h1v1h-1zM1015 147h1v1h-1zM1015 212h1v1h-1zM1015 277h1v1h-1zM1015 342h1v1h-1zM1015 407h1v1h-1zM1015 472h1v1h-1zM1015 537h1v1h-1zM1015 602h1v1h-1zM1017 82h1v1h-1zM1017 147h1v1h-1zM1017 212h1v1h-1zM1017 277h1v1h-1zM1017 342h1v1h-1zM1017 407h1v1h-1zM1017 472h1v1h-1zM1017 537h1v1h-1zM1017 602h1v1h-1zM1018 30h1v1h-1zM1018 43h1v1h-1zM1018 56h1v1h-1zM1018 69h1v1h-1zM1018 95h1v1h-1zM1018 108h1v1h-1zM1018 121h1v1h-1zM1018 134h1v1h-1zM1018 160h1v1h-1zM1018 173h1v1h-1zM1018 186h1v1h-1zM1018 199h1v1h-1zM1018 225h1v1h-1zM1018 238h1v1h-1zM1018 251h1v1h-1zM1018 264h1v1h-1zM1018 290h1v1h-1zM1018 303h1v1h-1zM1018 316h1v1h-1zM1018 329h1v1h-1zM1018 355h1v1h-1zM1018 368h1v1h-1zM1018 381h1v1h-1zM1018 394h1v1h-1zM1018 420h1v1h-1zM1018 433h1v1h-1zM1018 446h1v1h-1zM1018 459h1v1h-1zM1018 485h1v1h-1zM1018 498h1v1h-1zM1018 511h1v1h-1zM1018 524h1v1h-1zM1018 550h1v1h-1zM1018 563h1v1h-1zM1018 576h1v1h-1zM1018 589h1v1h-1zM1018 615h1v1h-1zM1018 628h1v1h-1zM1018 641h1v1h-1zM1018 654h1v1h-1zM1019 82h1v1h-1zM1019 147h1v1h-1zM1019 212h1v1h-1zM1019 277h1v1h-1zM1019 342h1v1h-1zM1019 407h1v1h-1zM1019 472h1v1h-1zM1019 537h1v1h-1zM1019 602h1v1h-1zM1020 30h1v1h-1zM1020 43h1v1h-1zM1020 56h1v1h-1zM1020 69h1v1h-1zM1020 95h1v1h-1zM1020 108h1v1h-1zM1020 121h1v1h-1zM1020 134h1v1h-1zM1020 160h1v1h-1zM1020 173h1v1h-1zM1020 186h1v1h-1zM1020 199h1v1h-1zM1020 225h1v1h-1zM1020 238h1v1h-1zM1020 251h1v1h-1zM1020 264h1v1h-1zM1020 290h1v1h-1zM1020 303h1v1h-1zM1020 316h1v1h-1zM1020 329h1v1h-1zM1020 355h1v1h-1zM1020 368h1v1h-1zM1020 381h1v1h-1zM1020 394h1v1h-1zM1020 420h1v1h-1zM1020 433h1v1h-1zM1020 446h1v1h-1zM1020 459h1v1h-1zM1020 485h1v1h-1zM1020 498h1v1h-1zM1020 511h1v1h-1zM1020 524h1v1h-1zM1020 550h1v1h-1zM1020 563h1v1h-1zM1020 576h1v1h-1zM1020 589h1v1h-1zM1020 615h1v1h-1zM1020 628h1v1h-1zM1020 641h1v1h-1zM1020 654h1v1h-1z"/></g><path fill="#ffa000" d="M516 5h3v10h-3zM516 17h11l-5.5 6z"/><rect x="518" y="0" width="8" height="1.5" fill="#ffa000"/><rect x="519" y="1" width="5" height="14" fill="#fff"/><rect x="521" y="3" width="2" height="10" fill="#ffa000"/><path fill="#ffa000" d="M217 24h9a1.5 1.5 0 0 1 1.5 1.5v9.5l-3 2.5-3 2-3-2-3-2.5v-9.5a1.5 1.5 0 0 1 1.5-1.5z"/><path fill="#000" d="M217 25h9v2h-3.5v9h-2v-9h-3.5z"/><defs><linearGradient id="mg" x1="0" y1="0" x2="0" y2="1"><stop offset="0" stop-color="#d020d0"/><stop offset="0.5" stop-color="#b800b8"/><stop offset="1" stop-color="#900090"/></linearGradient></defs><path fill="url(#mg)" d="M1 75h12l7 8.5-7 8.5h-12l-1-1v-15z"/><text style="font-family:'Liberation Sans',sans-serif" x="3.5" y="89.5" font-size="15" fill="#000" stroke="#000" stroke-width="0.0" textLength="8" lengthAdjust="spacingAndGlyphs" font-weight="bold">3</text><path fill="#000" stroke="#00eeee" stroke-width="1.7" d="M0.85 646.85h12l6.9 7.65-6.9 7.65h-12z"/><text style="font-family:'Liberation Sans',sans-serif" x="3.5" y="660.5" font-size="15" fill="#00eeee" stroke="#00eeee" stroke-width="0.0" textLength="8.5" lengthAdjust="spacingAndGlyphs" font-weight="bold">2</text><text style="font-family:'Liberation Serif',serif" x="-0.5" y="15" font-size="20.5" fill="#f0f0ff" stroke="#f0f0ff" stroke-width="0.5" textLength="32" lengthAdjust="spacingAndGlyphs">Tek</text><text style="font-family:'Liberation Sans',sans-serif" x="35.08" y="12.9" font-size="16" fill="#f0f0ff" stroke="#f0f0ff" stroke-width="0.0" textLength="30.18" lengthAdjust="spacing">Run</text><text style="font-family:'Liberation Sans',sans-serif" x="924.90" y="13.3" font-size="16" fill="#f0f0ff" stroke="#f0f0ff" stroke-width="0.0" textLength="39.20" lengthAdjust="spacing">Trig?</text><rect x="20.5" y="670.5" width="554" height="20" rx="5" fill="none" stroke="#d8d8d8" stroke-width="1"/><rect x="165" y="673" width="25" height="16" rx="8" fill="#00dddd"/><text style="font-family:'Liberation Sans',sans-serif" x="173.5" y="686" font-size="16" fill="#000" stroke="#000" stroke-width="0.0" textLength="7.5" lengthAdjust="spacingAndGlyphs">2</text><path fill="#00f0f0" d="M200 675h1v8h-1zM197 682h7l-3.5 4z"/><text style="font-family:'Liberation Sans',sans-serif" x="207.00" y="686" font-size="16" fill="#00f0f0" stroke="#00f0f0" stroke-width="0.0" textLength="74.10" lengthAdjust="spacing">50.0mVΩ</text><text style="font-family:'Liberation Sans',sans-serif" x="283" y="681.8" font-size="10" fill="#00f0f0" stroke="#00f0f0" stroke-width="0.0" textLength="4.5" lengthAdjust="spacingAndGlyphs">B</text><text style="font-family:'Liberation Sans',sans-serif" x="286.8" y="686.2" font-size="10" fill="#00f0f0" stroke="#00f0f0" stroke-width="0.0" textLength="5.5" lengthAdjust="spacingAndGlyphs">W</text><rect x="304" y="673" width="25" height="16" rx="8" fill="#a000a0"/><text style="font-family:'Liberation Sans',sans-serif" x="312.5" y="686" font-size="16" fill="#000" stroke="#000" stroke-width="0.0" textLength="7.5" lengthAdjust="spacingAndGlyphs">3</text><text style="font-family:'Liberation Sans',sans-serif" x="345.00" y="686" font-size="16" fill="#c800c8" stroke="#c800c8" stroke-width="0.0" textLength="75.26" lengthAdjust="spacing">50.0mVΩ</text><text style="font-family:'Liberation Sans',sans-serif" x="421" y="681.8" font-size="10" fill="#c000c0" stroke="#c000c0" stroke-width="0.0" textLength="4.5" lengthAdjust="spacingAndGlyphs">B</text><text style="font-family:'Liberation Sans',sans-serif" x="424.8" y="686.2" font-size="10" fill="#c000c0" stroke="#c000c0" stroke-width="0.0" textLength="5.5" lengthAdjust="spacingAndGlyphs">W</text><rect x="582.5" y="670.5" width="147" height="37" rx="6" fill="none" stroke="#d8d8d8" stroke-width="1"/><text style="font-family:'Liberation Sans',sans-serif" x="588.06" y="685.6" font-size="15.5" fill="#fff" stroke="#fff" stroke-width="0.0" textLength="47.04" lengthAdjust="spacing">400ns</text><rect x="587" y="691" width="12" height="13" rx="2" fill="#ffa000"/><path fill="#000" d="M589 693h8v2h-3v8h-2v-8h-3z"/><path fill="#ffa000" d="M600 697h6v1h-6zM605 694l4 3.5-4 3.5z"/><path fill="#ffa000" d="M610 694h11l-5.5 6z"/><text style="font-family:'Liberation Sans',sans-serif" x="623.50" y="702.8" font-size="15.5" fill="#ffa000" stroke="#ffa000" stroke-width="0.0" textLength="92.60" lengthAdjust="spacing">1.200000µs</text><rect x="737.5" y="670.5" width="106" height="37" rx="6" fill="none" stroke="#d8d8d8" stroke-width="1"/><text style="font-family:'Liberation Sans',sans-serif" x="742.75" y="685.3" font-size="15.5" fill="#fff" stroke="#fff" stroke-width="0.0" textLength="71.85" lengthAdjust="spacing">2.50GS/s</text><text style="font-family:'Liberation Sans',sans-serif" x="742.00" y="702" font-size="15.5" fill="#fff" stroke="#fff" stroke-width="0.0" textLength="81.10" lengthAdjust="spacing">1M points</text><rect x="851.5" y="670.5" width="169" height="37" rx="6" fill="none" stroke="#d8d8d8" stroke-width="1"/><rect x="882" y="673" width="25" height="16" rx="8" fill="#00a000"/><text style="font-family:'Liberation Sans',sans-serif" x="889.5" y="686" font-size="16" fill="#000" stroke="#000" stroke-width="0.0" textLength="8" lengthAdjust="spacingAndGlyphs" font-weight="bold">4</text><path fill="none" stroke="#fff" stroke-width="1.6" d="M920 685h4l4-9h4"/><text style="font-family:'Liberation Sans',sans-serif" x="965.06" y="685.5" font-size="15.5" fill="#fff" stroke="#fff" stroke-width="0.0" textLength="50.46" lengthAdjust="spacing">4.00 V</text><path fill="#a000a0" d="M0 714h13a4 4 0 0 1 4 4v46a4 4 0 0 1-4 4h-13z"/><text style="font-family:'Liberation Sans',sans-serif" x="4" y="748" font-size="14" fill="#000" stroke="#000" stroke-width="0.0" textLength="9" lengthAdjust="spacingAndGlyphs">3</text><path fill="#6c6c6c" d="M23 714h108l3 3v49l-2 2h-110l-2-2v-49z"/><rect x="22" y="714" width="110" height="2" fill="#8a8a8a"/><rect x="22" y="766" width="110" height="2" fill="#8a8a8a"/><rect x="22" y="716" width="110" height="50" fill="#545451"/><text style="font-family:'Liberation Sans',sans-serif" x="41.00" y="732.8" font-size="16" fill="#fff" stroke="#fff" stroke-width="0.0" textLength="73.00" lengthAdjust="spacing">Coupling</text><rect x="33.5" y="742.5" width="29" height="26" rx="3" fill="#0a6ef5" stroke="#9ab" stroke-width="1"/><text style="font-family:'Liberation Sans',sans-serif" x="38.08" y="759.9" font-size="16" fill="#fff" stroke="#fff" stroke-width="0.0" textLength="22.17" lengthAdjust="spacing">DC</text><rect x="90" y="742" width="30" height="26" fill="#333331"/><text style="font-family:'Liberation Sans',sans-serif" x="95.06" y="759.9" font-size="16" fill="#6e6e6e" stroke="#6e6e6e" stroke-width="0.0" textLength="21.94" lengthAdjust="spacing">AC</text><path fill="#6c6c6c" d="M141 714h108l3 3v49l-2 2h-110l-2-2v-49z"/><rect x="140" y="714" width="110" height="2" fill="#8a8a8a"/><rect x="140" y="766" width="110" height="2" fill="#8a8a8a"/><rect x="140" y="716" width="110" height="50" fill="#545451"/><text style="font-family:'Liberation Sans',sans-serif" x="146.24" y="732.6" font-size="16" fill="#fff" stroke="#fff" stroke-width="0.0" textLength="98.10" lengthAdjust="spacing">Termination</text><text style="font-family:'Liberation Sans',sans-serif" x="148.58" y="760" font-size="16" fill="#fff" stroke="#fff" stroke-width="0.0" textLength="36.52" lengthAdjust="spacing">1MΩ</text><rect x="202.5" y="742.5" width="41" height="26" rx="3" fill="#0a6ef5" stroke="#9ab" stroke-width="1"/><text style="font-family:'Liberation Sans',sans-serif" x="207.24" y="760" font-size="16" fill="#fff" stroke="#fff" stroke-width="0.0" textLength="31.86" lengthAdjust="spacing">50Ω</text><path fill="#6c6c6c" d="M259 714h108l3 3v49l-2 2h-110l-2-2v-49z"/><rect x="258" y="714" width="110" height="2" fill="#8a8a8a"/><rect x="258" y="766" width="110" height="2" fill="#8a8a8a"/><rect x="258" y="716" width="110" height="50" fill="#545451"/><text style="font-family:'Liberation Sans',sans-serif" x="288.00" y="733" font-size="16" fill="#fff" stroke="#fff" stroke-width="0.0" textLength="48.44" lengthAdjust="spacing">Invert</text><text style="font-family:'Liberation Sans',sans-serif" x="272.00" y="760" font-size="16" fill="#fff" stroke="#fff" stroke-width="0.0" textLength="24.00" lengthAdjust="spacing">On</text><rect x="325.5" y="742.5" width="32" height="26" rx="3" fill="#0a6ef5" stroke="#9ab" stroke-width="1"/><text style="font-family:'Liberation Sans',sans-serif" x="329.00" y="760" font-size="16" fill="#fff" stroke="#fff" stroke-width="0.0" textLength="24.28" lengthAdjust="spacing">Off</text><path fill="#6c6c6c" d="M377 714h108l3 3v49l-2 2h-110l-2-2v-49z"/><rect x="376" y="714" width="110" height="2" fill="#8a8a8a"/><rect x="376" y="766" width="110" height="2" fill="#8a8a8a"/><rect x="376" y="716" width="110" height="50" fill="#545451"/><text style="font-family:'Liberation Sans',sans-serif" x="388.00" y="737.9" font-size="16" fill="#fff" stroke="#fff" stroke-width="0.0" textLength="86.00" lengthAdjust="spacing">Bandwidth</text><rect x="401" y="743" width="60" height="15" fill="#0a6ef5"/><text style="font-family:'Liberation Sans',sans-serif" x="404.08" y="755" font-size="16" fill="#fff" stroke="#fff" stroke-width="0.0" textLength="54.76" lengthAdjust="spacing">20MHz</text><path fill="#6c6c6c" d="M495 714h108l3 3v49l-2 2h-110l-2-2v-49z"/><rect x="494" y="714" width="110" height="2" fill="#8a8a8a"/><rect x="494" y="766" width="110" height="2" fill="#8a8a8a"/><rect x="494" y="716" width="110" height="50" fill="#545451"/><rect x="514" y="732" width="25" height="17" rx="8.5" fill="#a000a0"/><text style="font-family:'Liberation Sans',sans-serif" x="521" y="746.5" font-size="14" fill="#000" stroke="#000" stroke-width="0.0" textLength="10" lengthAdjust="spacingAndGlyphs">3</text><text style="font-family:'Liberation Sans',sans-serif" x="545.58" y="745.8" font-size="16" fill="#fff" stroke="#fff" stroke-width="0.0" textLength="40.92" lengthAdjust="spacing">Label</text><path fill="#6c6c6c" d="M731 714h108l3 3v49l-2 2h-110l-2-2v-49z"/><rect x="730" y="714" width="110" height="2" fill="#8a8a8a"/><rect x="730" y="766" width="110" height="2" fill="#8a8a8a"/><rect x="730" y="716" width="110" height="50" fill="#545451"/><path fill="#e8e8e8" d="M785 727l11 11h-22z"/><rect x="776" y="736" width="18" height="2" fill="#9a9a9a"/><text style="font-family:'Liberation Sans',sans-serif" x="765.50" y="752.8" font-size="16" fill="#fff" stroke="#fff" stroke-width="0.0" textLength="39.60" lengthAdjust="spacing">More</text><rect x="909.5" y="729.5" width="111" height="36" rx="6" fill="none" stroke="#d8d8d8" stroke-width="1"/><text style="font-family:'Liberation Sans',sans-serif" x="924.24" y="745.9" font-size="15.5" fill="#fff" stroke="#fff" stroke-width="0.0" textLength="92.44" lengthAdjust="spacing">4 May 2023</text><text style="font-family:'Liberation Sans',sans-serif" x="916.16" y="761.7" font-size="15.5" fill="#fff" stroke="#fff" stroke-width="0.0" textLength="69.44" lengthAdjust="spacing">12:40:00</text></svg></body></html>
